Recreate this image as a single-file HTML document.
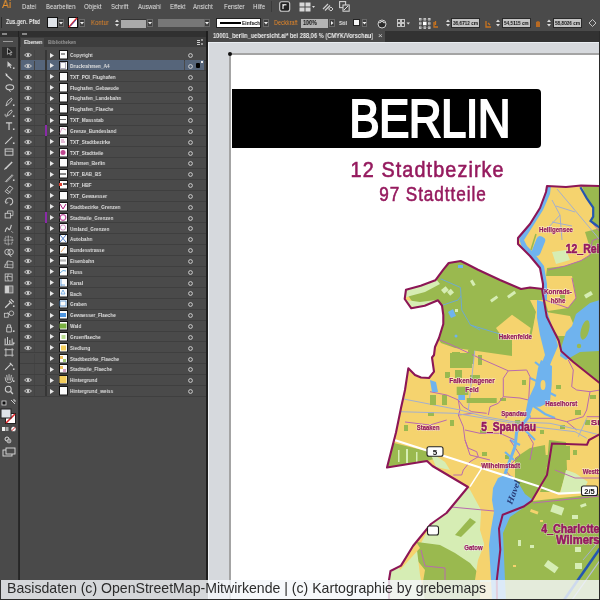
<!DOCTYPE html><html><head><meta charset="utf-8"><style>
*{margin:0;padding:0;box-sizing:border-box}
html,body{width:600px;height:600px;overflow:hidden;background:#4a4a4a;font-family:"Liberation Sans", sans-serif}
.a{position:absolute}
.t{position:absolute;white-space:nowrap;line-height:1;transform-origin:0 0;will-change:transform}
</style></head><body>
<div class="t" style="left:2.0px;top:-0.61px;font-size:11.5px;color:#e8922e;font-weight:normal;transform:scaleX(0.9);">Ai</div>
<div class="t" style="left:22px;top:2.62px;font-size:7.6px;color:#e2e2e2;font-weight:normal;transform:scaleX(0.8);">Datei</div>
<div class="t" style="left:45.6px;top:2.62px;font-size:7.6px;color:#e2e2e2;font-weight:normal;transform:scaleX(0.8);">Bearbeiten</div>
<div class="t" style="left:83.75px;top:2.62px;font-size:7.6px;color:#e2e2e2;font-weight:normal;transform:scaleX(0.8);">Objekt</div>
<div class="t" style="left:111px;top:2.62px;font-size:7.6px;color:#e2e2e2;font-weight:normal;transform:scaleX(0.8);">Schrift</div>
<div class="t" style="left:137.5px;top:2.62px;font-size:7.6px;color:#e2e2e2;font-weight:normal;transform:scaleX(0.8);">Auswahl</div>
<div class="t" style="left:170px;top:2.62px;font-size:7.6px;color:#e2e2e2;font-weight:normal;transform:scaleX(0.8);">Effekt</div>
<div class="t" style="left:192.5px;top:2.62px;font-size:7.6px;color:#e2e2e2;font-weight:normal;transform:scaleX(0.8);">Ansicht</div>
<div class="t" style="left:224px;top:2.62px;font-size:7.6px;color:#e2e2e2;font-weight:normal;transform:scaleX(0.8);">Fenster</div>
<div class="t" style="left:252.5px;top:2.62px;font-size:7.6px;color:#e2e2e2;font-weight:normal;transform:scaleX(0.8);">Hilfe</div>
<div class="a" style="left:271px;top:1px;width:1px;height:11px;background:#3a3a3a"></div>
<svg class="a" style="left:279px;top:1px" width="12" height="11"><rect x="0.7" y="0.7" width="10" height="9.5" rx="2" fill="#222" stroke="#cfcfcf" stroke-width="1.1"/><path d="M4 3 V8 M4 5 q1 -2 3.5 -1" stroke="#eee" stroke-width="1.2" fill="none"/></svg>
<svg class="a" style="left:299px;top:1.5px" width="17" height="10"><rect x="0.5" y="0.5" width="5" height="4" fill="#d8d8d8"/><rect x="6.5" y="0.5" width="5" height="4" fill="#d8d8d8"/><rect x="0.5" y="5.5" width="5" height="4" fill="#d8d8d8"/><rect x="6.5" y="5.5" width="5" height="4" fill="#d8d8d8"/><path d="M13 4 L16 4 L14.5 6 Z" fill="#ddd"/></svg>
<svg class="a" style="left:322px;top:1px" width="12" height="11"><path d="M1 8 L6 3 M3 9.5 L8 4.5" stroke="#cfcfcf" stroke-width="1.2"/><path d="M6.5 8 L9 6 L11 8 L9 10 Z" stroke="#cfcfcf" stroke-width="1" fill="none"/></svg>
<svg class="a" style="left:338.5px;top:1px" width="11" height="11"><rect x="0.6" y="0.6" width="6" height="6" fill="none" stroke="#d0d0d0" stroke-width="1.1"/><rect x="4" y="4" width="6.2" height="6.2" fill="#4a4a4a" stroke="#d0d0d0" stroke-width="1.1"/><path d="M5 9 L9 5" stroke="#ddd"/></svg>
<div class="a" style="left:1px;top:17px;width:1px;height:11px;background:#2c2c2c"></div>
<div class="t" style="left:5.6px;top:19.21px;font-size:6.4px;color:#e8e8e8;font-weight:bold;transform:scaleX(0.82);">Zus.gen. Pfad</div>
<div class="a" style="left:47px;top:17px;width:10.5px;height:11px;background:#dfe3e8;border:1px solid #111"></div>
<svg class="a" style="left:58px;top:19px" width="6" height="8"><rect x="0.5" y="0.5" width="5" height="7" fill="#3e3e3e" stroke="#6a6a6a"/><path d="M1.0 3.0 L5.0 3.0 L3.0 5.5 Z" fill="#eee"/></svg>
<svg class="a" style="left:68px;top:17px" width="10" height="11"><rect x="0.5" y="0.5" width="9" height="10" fill="#fff" stroke="#111"/><path d="M1 10 L9 1" stroke="#e0262a" stroke-width="1.6"/><path d="M2.5 9 L8 3" stroke="#3050c0" stroke-width="0.8"/></svg>
<svg class="a" style="left:79px;top:19px" width="6" height="8"><rect x="0.5" y="0.5" width="5" height="7" fill="#3e3e3e" stroke="#6a6a6a"/><path d="M1.0 3.0 L5.0 3.0 L3.0 5.5 Z" fill="#eee"/></svg>
<div class="t" style="left:91px;top:18.66px;font-size:7px;color:#e2862a;font-weight:normal;transform:scaleX(0.86);">Kontur</div>
<svg class="a" style="left:114px;top:18px" width="6" height="10"><path d="M1 4 L3 1.5 L5 4 Z M1 6 L3 8.5 L5 6 Z" fill="#ddd"/></svg>
<div class="a" style="left:121px;top:19px;width:25px;height:8.5px;background:#a9a9a9;border-top:1px solid #333"></div>
<svg class="a" style="left:147px;top:19px" width="6" height="8"><rect x="0.5" y="0.5" width="5" height="7" fill="#3e3e3e" stroke="#6a6a6a"/><path d="M1.0 3.0 L5.0 3.0 L3.0 5.5 Z" fill="#eee"/></svg>
<div class="a" style="left:157.5px;top:18.7px;width:46.5px;height:8px;background:#777"></div>
<svg class="a" style="left:204px;top:19px" width="6" height="8"><rect x="0.5" y="0.5" width="5" height="7" fill="#3e3e3e" stroke="#6a6a6a"/><path d="M1.0 3.0 L5.0 3.0 L3.0 5.5 Z" fill="#eee"/></svg>
<div class="a" style="left:216px;top:17.5px;width:45px;height:10px;background:#fff;border:1px solid #222"></div>
<div class="a" style="left:220px;top:21.5px;width:21px;height:2px;background:#000"></div>
<div class="t" style="left:242px;top:19.78px;font-size:6.1px;color:#111;font-weight:bold;transform:scaleX(0.82);">Einfach</div>
<svg class="a" style="left:262.5px;top:19px" width="6" height="8"><rect x="0.5" y="0.5" width="5" height="7" fill="#3e3e3e" stroke="#6a6a6a"/><path d="M1.0 3.0 L5.0 3.0 L3.0 5.5 Z" fill="#eee"/></svg>
<div class="t" style="left:274px;top:18.86px;font-size:7px;color:#e2862a;font-weight:normal;transform:scaleX(0.8);">Deckkraft</div>
<div class="a" style="left:301px;top:18.5px;width:26.5px;height:9px;background:#b4b4b4"></div>
<div class="t" style="left:303px;top:19.60px;font-size:6.3px;color:#111;font-weight:bold;transform:scaleX(0.86);">100%</div>
<svg class="a" style="left:329px;top:19px" width="6" height="8"><rect x="0.5" y="0.5" width="5" height="7" fill="#3e3e3e" stroke="#6a6a6a"/><path d="M2 2 L4.5 4 L2 6 Z" fill="#eee"/></svg>
<div class="t" style="left:339px;top:19.57px;font-size:6.0px;color:#e0e0e0;font-weight:bold;transform:scaleX(0.86);">Stil</div>
<div class="a" style="left:352.5px;top:19px;width:7.5px;height:7px;background:#f4f4f4;border:1px solid #222"></div>
<svg class="a" style="left:361.5px;top:19px" width="5" height="8"><rect x="0.5" y="0.5" width="4" height="7" fill="#3e3e3e" stroke="#6a6a6a"/><path d="M0.5 3.0 L4.5 3.0 L2.5 5.5 Z" fill="#eee"/></svg>
<svg class="a" style="left:377px;top:18.5px" width="10" height="10"><circle cx="5" cy="5" r="4" fill="#2a2a2a" stroke="#cfcfcf" stroke-width="1"/><path d="M2.5 4 q2.5 -3 5 0" stroke="#eee" stroke-width="1.2" fill="none"/></svg>
<svg class="a" style="left:397px;top:19px" width="14" height="9"><rect x="0.5" y="0.5" width="3" height="3" fill="none" stroke="#d0d0d0" stroke-width="0.9"/><rect x="4.5" y="0.5" width="3" height="3" fill="none" stroke="#d0d0d0" stroke-width="0.9"/><rect x="0.5" y="4.5" width="3" height="3" fill="none" stroke="#d0d0d0" stroke-width="0.9"/><rect x="4.5" y="4.5" width="3" height="3" fill="none" stroke="#d0d0d0" stroke-width="0.9"/><path d="M9.5 3.5 L13 3.5 L11.25 5.5 Z" fill="#ddd"/></svg>
<svg class="a" style="left:419px;top:18px" width="12" height="11"><g fill="#d0d0d0"><rect x="0" y="0" width="2.5" height="2.5"/><rect x="4.5" y="0" width="2.5" height="2.5"/><rect x="9" y="0" width="2.5" height="2.5"/><rect x="0" y="4.2" width="2.5" height="2.5"/><rect x="9" y="4.2" width="2.5" height="2.5"/><rect x="0" y="8.4" width="2.5" height="2.5"/><rect x="4.5" y="8.4" width="2.5" height="2.5"/><rect x="9" y="8.4" width="2.5" height="2.5"/></g><rect x="4" y="3.7" width="3.5" height="3.5" fill="#fff"/><path d="M1.2 1.2 H10.2 V9.6 H1.2 Z" stroke="#888" stroke-width="0.6" fill="none"/></svg>
<svg class="a" style="left:433px;top:20px" width="6" height="8"><path d="M1 2 L1 7 L5 7 M2.5 1 L2.5 5" stroke="#c8731f" stroke-width="1.3" fill="none"/></svg>
<svg class="a" style="left:445px;top:18px" width="6" height="10"><path d="M1 4 L3 1.5 L5 4 Z M1 6 L3 8.5 L5 6 Z" fill="#ddd"/></svg>
<div class="a" style="left:451px;top:18px;width:29px;height:9.5px;background:#c4c4c4;border:1px solid #2a2a2a"></div>
<div class="t" style="left:452.5px;top:19.87px;font-size:6.0px;color:#111;font-weight:bold;transform:scaleX(0.78);">36,6712 cm</div>
<svg class="a" style="left:484.5px;top:20px" width="7" height="8"><path d="M1 1 L1 7 L6 7 M3 3 L5 5" stroke="#c8731f" stroke-width="1.3" fill="none"/></svg>
<svg class="a" style="left:495px;top:18px" width="6" height="10"><path d="M1 4 L3 1.5 L5 4 Z M1 6 L3 8.5 L5 6 Z" fill="#ddd"/></svg>
<div class="a" style="left:502px;top:18px;width:29px;height:9.5px;background:#c4c4c4;border:1px solid #2a2a2a"></div>
<div class="t" style="left:503.5px;top:19.87px;font-size:6.0px;color:#111;font-weight:bold;transform:scaleX(0.78);">54,5115 cm</div>
<svg class="a" style="left:535px;top:20px" width="7" height="8"><path d="M1 7 L1 2 L3 1 L5 2 L5 7 Z" fill="#b86a22"/></svg>
<svg class="a" style="left:546px;top:18px" width="6" height="10"><path d="M1 4 L3 1.5 L5 4 Z M1 6 L3 8.5 L5 6 Z" fill="#ddd"/></svg>
<div class="a" style="left:553px;top:18px;width:29px;height:9.5px;background:#c4c4c4;border:1px solid #2a2a2a"></div>
<div class="t" style="left:554.5px;top:19.87px;font-size:6.0px;color:#111;font-weight:bold;transform:scaleX(0.78);">58,8026 cm</div>
<svg class="a" style="left:588px;top:18px" width="9" height="10"><path d="M4.5 1.5 L8 5 L4.5 8.5 L1 5 Z" stroke="#d0d0d0" stroke-width="0.9" fill="none"/></svg>
<div class="a" style="left:0;top:31px;width:208px;height:6px;background:#303030"></div>
<div class="a" style="left:2px;top:33px;width:5px;height:2px;background:#888"></div>
<div class="a" style="left:22px;top:33px;width:5px;height:2px;background:#888"></div>
<div class="a" style="left:18px;top:31px;width:1px;height:6px;background:#222"></div>
<div class="a" style="left:208px;top:31px;width:392px;height:11px;background:#323232"></div>
<div class="a" style="left:208px;top:31px;width:177px;height:11px;background:#4a4a4a"></div>
<div class="t" style="left:212.5px;top:33.15px;font-size:6.8px;color:#ececec;font-weight:bold;transform:scaleX(0.84);">10001_berlin_uebersicht.ai* bei 288,06 % (CMYK/Vorschau)</div>
<div class="t" style="left:377.5px;top:32.26px;font-size:8px;color:#cfcfcf;font-weight:normal;transform:scaleX(1.0);">×</div>
<div class="a" style="left:18px;top:37px;width:2px;height:543px;background:#2a2a2a"></div>
<div class="a" style="left:3px;top:40.5px;width:10px;height:1px;background:#9a9a9a"></div>
<div class="a" style="left:2px;top:47px;width:14px;height:10.5px;background:#2f2f2f"></div>
<svg class="a" style="left:1px;top:44.5px" width="16" height="15"><g transform="translate(1.8 1.6) scale(0.78)" opacity="0.9"><path d="M6 2 L6 10 L8 8 L10 11 L11 10.5 L9.5 7.5 L12 7.5 Z" fill="#111" stroke="#ddd" stroke-width="0.9"/></g></svg>
<svg class="a" style="left:1px;top:58.0px" width="16" height="15"><g transform="translate(1.8 1.6) scale(0.78)" opacity="0.9"><path d="M6 2 L6 10 L8 8 L10 11 L11 10.5 L9.5 7.5 L12 7.5 Z" fill="#ddd"/><rect x="13" y="10" width="2" height="2" fill="#ddd"/></g></svg>
<svg class="a" style="left:1px;top:69.5px" width="16" height="15"><g transform="translate(1.8 1.6) scale(0.78)" opacity="0.9"><path d="M4 4 L12 11" stroke="#ddd" stroke-width="1.6"/><path d="M3 2 L6 3 L5 6 Z" fill="#eee"/></g></svg>
<svg class="a" style="left:1px;top:81.0px" width="16" height="15"><g transform="translate(1.8 1.6) scale(0.78)" opacity="0.9"><ellipse cx="9" cy="6" rx="5" ry="3.3" stroke="#ddd" stroke-width="1.3" fill="none"/><path d="M7 8 L10 12" stroke="#ddd" stroke-width="1.2"/></g></svg>
<svg class="a" style="left:1px;top:94.5px" width="16" height="15"><g transform="translate(1.8 1.6) scale(0.78)" opacity="0.9"><path d="M4 12 L6 6 L11 2 L12 4 L8 9 Z" stroke="#ddd" stroke-width="1.1" fill="none"/><rect x="13" y="10" width="2" height="2" fill="#ddd"/></g></svg>
<svg class="a" style="left:1px;top:106.0px" width="16" height="15"><g transform="translate(1.8 1.6) scale(0.78)" opacity="0.9"><path d="M5 11 L7 6 L11 3 L12 5 L9 9 Z" stroke="#ddd" stroke-width="1.1" fill="none"/><path d="M3 8 q-1 3 2 4" stroke="#ddd" fill="none"/><rect x="13" y="10" width="2" height="2" fill="#ddd"/></g></svg>
<svg class="a" style="left:1px;top:118.5px" width="16" height="15"><g transform="translate(1.8 1.6) scale(0.78)" opacity="0.9"><path d="M4 3 H12 M8 3 V12" stroke="#ddd" stroke-width="1.5" fill="none"/><rect x="13" y="10" width="2" height="2" fill="#ddd"/></g></svg>
<svg class="a" style="left:1px;top:132.5px" width="16" height="15"><g transform="translate(1.8 1.6) scale(0.78)" opacity="0.9"><path d="M3 12 L12 3" stroke="#ddd" stroke-width="1.3"/><rect x="13" y="10" width="2" height="2" fill="#ddd"/></g></svg>
<svg class="a" style="left:1px;top:145.0px" width="16" height="15"><g transform="translate(1.8 1.6) scale(0.78)" opacity="0.9"><rect x="3" y="3" width="10" height="8" stroke="#ddd" stroke-width="1.2" fill="none"/><path d="M3 6 H13" stroke="#ddd"/></g></svg>
<svg class="a" style="left:1px;top:157.5px" width="16" height="15"><g transform="translate(1.8 1.6) scale(0.78)" opacity="0.9"><path d="M3 12 L12 3" stroke="#ddd" stroke-width="2"/><path d="M2 13 q1 -3 3 -2" stroke="#ddd" fill="none"/></g></svg>
<svg class="a" style="left:1px;top:169.5px" width="16" height="15"><g transform="translate(1.8 1.6) scale(0.78)" opacity="0.9"><path d="M4 12 L12 4 L13 5 L5 13 Z M3 13 L4 12" stroke="#ddd" stroke-width="1.1" fill="none"/><rect x="13" y="10" width="2" height="2" fill="#ddd"/></g></svg>
<svg class="a" style="left:1px;top:182.0px" width="16" height="15"><g transform="translate(1.8 1.6) scale(0.78)" opacity="0.9"><path d="M3 10 L9 3 L13 6 L7 13 Z" stroke="#ddd" stroke-width="1.1" fill="none"/><path d="M5 8 L10 12" stroke="#ddd"/></g></svg>
<svg class="a" style="left:1px;top:194.2px" width="16" height="15"><g transform="translate(1.8 1.6) scale(0.78)" opacity="0.9"><path d="M4 9 A4.5 4.5 0 1 1 9 12" stroke="#ddd" stroke-width="1.3" fill="none"/><path d="M3 7 L4 10 L7 9" stroke="#ddd" fill="none"/></g></svg>
<svg class="a" style="left:1px;top:206.5px" width="16" height="15"><g transform="translate(1.8 1.6) scale(0.78)" opacity="0.9"><rect x="3" y="6" width="7" height="6" stroke="#ddd" stroke-width="1.1" fill="none"/><path d="M6 6 V3 H13 V9 H10" stroke="#ddd" fill="none"/></g></svg>
<svg class="a" style="left:1px;top:220.5px" width="16" height="15"><g transform="translate(1.8 1.6) scale(0.78)" opacity="0.9"><path d="M3 12 q2 -8 4 -4 q2 4 4 -5" stroke="#ddd" stroke-width="1.4" fill="none"/><path d="M11 11 L13 13" stroke="#ddd"/></g></svg>
<svg class="a" style="left:1px;top:232.5px" width="16" height="15"><g transform="translate(1.8 1.6) scale(0.78)" opacity="0.9"><rect x="3" y="3" width="9" height="9" stroke="#ddd" stroke-width="1" stroke-dasharray="2 1" fill="none"/><path d="M1 7 H14 M7 1 V14" stroke="#ddd" stroke-width="0.7"/></g></svg>
<svg class="a" style="left:1px;top:245.0px" width="16" height="15"><g transform="translate(1.8 1.6) scale(0.78)" opacity="0.9"><circle cx="6" cy="7" r="3.5" stroke="#ddd" stroke-width="1.1" fill="none"/><circle cx="10" cy="7" r="3.5" stroke="#ddd" stroke-width="1.1" fill="none"/><path d="M8 10 L11 13" stroke="#ddd" stroke-width="1.3"/></g></svg>
<svg class="a" style="left:1px;top:257.2px" width="16" height="15"><g transform="translate(1.8 1.6) scale(0.78)" opacity="0.9"><path d="M2 11 L6 3 L13 4 L13 12 Z" stroke="#ddd" stroke-width="1" fill="none"/><path d="M6 3 L6 12 M2 8 H13" stroke="#ddd" stroke-width="0.7"/></g></svg>
<svg class="a" style="left:1px;top:269.5px" width="16" height="15"><g transform="translate(1.8 1.6) scale(0.78)" opacity="0.9"><rect x="3" y="3" width="9" height="9" stroke="#ddd" stroke-width="1" fill="none"/><path d="M3 7 q5 -2 9 0 M7 3 q-2 5 0 9" stroke="#ddd" fill="none"/></g></svg>
<svg class="a" style="left:1px;top:281.5px" width="16" height="15"><g transform="translate(1.8 1.6) scale(0.78)" opacity="0.9"><rect x="3" y="3" width="10" height="9" stroke="#ddd" stroke-width="1" fill="#777"/><rect x="3" y="3" width="5" height="9" fill="#ddd"/></g></svg>
<svg class="a" style="left:1px;top:295.5px" width="16" height="15"><g transform="translate(1.8 1.6) scale(0.78)" opacity="0.9"><path d="M3 13 L10 6 M8 4 L12 8 M10 2 L14 6" stroke="#ddd" stroke-width="1.5" fill="none"/><rect x="13" y="10" width="2" height="2" fill="#ddd"/></g></svg>
<svg class="a" style="left:1px;top:306.5px" width="16" height="15"><g transform="translate(1.8 1.6) scale(0.78)" opacity="0.9"><rect x="2" y="6" width="5" height="5" stroke="#ddd" fill="none"/><circle cx="11" cy="6" r="3" stroke="#ddd" fill="none"/><path d="M6 5 L9 8" stroke="#ddd"/></g></svg>
<svg class="a" style="left:1px;top:320.5px" width="16" height="15"><g transform="translate(1.8 1.6) scale(0.78)" opacity="0.9"><path d="M5 12 V6 H11 V12 Z M6 6 V3 H10 V6" stroke="#ddd" stroke-width="1.1" fill="none"/><rect x="13" y="10" width="2" height="2" fill="#ddd"/></g></svg>
<svg class="a" style="left:1px;top:332.5px" width="16" height="15"><g transform="translate(1.8 1.6) scale(0.78)" opacity="0.9"><path d="M3 12 V5 M6 12 V3 M9 12 V7 M12 12 V5 M2 13 H14" stroke="#ddd" stroke-width="1.3"/><rect x="13" y="10" width="2" height="2" fill="#ddd"/></g></svg>
<svg class="a" style="left:1px;top:344.5px" width="16" height="15"><g transform="translate(1.8 1.6) scale(0.78)" opacity="0.9"><rect x="4" y="4" width="8" height="7" stroke="#ddd" stroke-width="1.1" fill="none"/><path d="M2 4 H4 M12 4 H14 M2 11 H4 M12 11 H14 M4 2 V4 M12 2 V4 M4 11 V13 M12 11 V13" stroke="#ddd"/></g></svg>
<svg class="a" style="left:1px;top:358.5px" width="16" height="15"><g transform="translate(1.8 1.6) scale(0.78)" opacity="0.9"><path d="M3 12 L11 4 M9 3 L13 7" stroke="#ddd" stroke-width="1.4" fill="none"/><rect x="13" y="10" width="2" height="2" fill="#ddd"/></g></svg>
<svg class="a" style="left:1px;top:371.0px" width="16" height="15"><g transform="translate(1.8 1.6) scale(0.78)" opacity="0.9"><path d="M4 11 L3 6 M6 10 L5 3 M8 10 L8 2 M10 10 L11 3 M12 11 L13 6 M4 11 q4 4 8 0" stroke="#ddd" stroke-width="1.1" fill="none"/><rect x="13" y="10" width="2" height="2" fill="#ddd"/></g></svg>
<svg class="a" style="left:1px;top:383.2px" width="16" height="15"><g transform="translate(1.8 1.6) scale(0.78)" opacity="0.9"><circle cx="7" cy="6" r="3.8" stroke="#ddd" stroke-width="1.3" fill="none"/><path d="M10 9 L13 12" stroke="#ddd" stroke-width="1.8"/></g></svg>
<svg class="a" style="left:0px;top:398px" width="18" height="62"><rect x="2" y="3" width="4" height="4" fill="#111" stroke="#ddd" stroke-width="0.8"/><path d="M11 2 L15 6 M13 2 H15 V4" stroke="#ddd" stroke-width="0.9" fill="none"/><rect x="5.5" y="15.5" width="10" height="10" fill="#fff" stroke="#222"/><path d="M6 25 L15 16" stroke="#e0262a" stroke-width="1.6"/><rect x="1" y="11" width="10" height="9" fill="#dfe3e8" stroke="#222"/><rect x="2" y="29" width="3" height="4" fill="#eee"/><rect x="5.5" y="29" width="3" height="4" fill="#aaa"/><circle cx="13.5" cy="31" r="2.6" fill="#fff" stroke="#222" stroke-width="0.5"/><path d="M11.8 32.8 L15.2 29.2" stroke="#e0262a" stroke-width="1"/><circle cx="7" cy="41" r="2" fill="none" stroke="#ddd"/><circle cx="9" cy="43" r="2" fill="#888" stroke="#ddd" stroke-width="0.6"/><rect x="3" y="52" width="9" height="6" fill="none" stroke="#ddd" stroke-width="0.9"/><rect x="6" y="50" width="9" height="6" fill="#4a4a4a" stroke="#ddd" stroke-width="0.9"/></svg>
<div class="a" style="left:19px;top:37px;width:1px;height:543px;background:#262626"></div>
<div class="a" style="left:20px;top:37px;width:186px;height:10px;background:#3d3d3d"></div>
<div class="a" style="left:21px;top:38px;width:22.7px;height:9px;background:#4a4a4a"></div>
<div class="t" style="left:24px;top:38.97px;font-size:6.0px;color:#eeeeee;font-weight:bold;transform:scaleX(0.84);">Ebenen</div>
<div class="t" style="left:48px;top:38.97px;font-size:6.0px;color:#9a9a9a;font-weight:bold;transform:scaleX(0.78);">Bibliotheken</div>
<div class="a" style="left:197px;top:40px;width:3px;height:1px;background:#ccc;box-shadow:0 2px 0 #ccc,0 4px 0 #ccc"></div>
<div class="a" style="left:201px;top:39px;width:3px;height:6px;border-left:2px dotted #999"></div>
<div class="a" style="left:206px;top:31px;width:2px;height:549px;background:#1e1e1e"></div>
<div class="a" style="left:20px;top:59.60px;width:186px;height:1px;background:#3f3f3f"></div>
<div class="a" style="left:44.5px;top:49.50px;width:2.2px;height:10.6px;background:#363636"></div>
<div class="a" style="left:33.5px;top:50.00px;width:1px;height:9.5px;background:#444"></div>
<svg class="a" style="left:23.5px;top:52.00px" width="8" height="6"><path d="M0.5 3 Q4 -0.5 7.5 3 Q4 6.5 0.5 3 Z" fill="none" stroke="#d0d0d0" stroke-width="0.9"/><circle cx="4" cy="3" r="1.2" fill="#d0d0d0"/></svg>
<svg class="a" style="left:50px;top:52.50px" width="4" height="5"><path d="M0 0 L4 2.5 L0 5 Z" fill="#e8e8e8"/></svg>
<svg class="a" style="left:59px;top:50.00px" width="9" height="9.5"><rect x="0.5" y="0.5" width="8" height="8.5" fill="#fbfbfb" stroke="#151515"/><rect x="2" y="3" width="4" height="2" fill="#999"/></svg>
<div class="t" style="left:70px;top:52.07px;font-size:6.0px;color:#dedede;font-weight:bold;transform:scaleX(0.8);">Copyright</div>
<svg class="a" style="left:187px;top:52.00px" width="7" height="7"><circle cx="3.5" cy="3.5" r="1.9" fill="none" stroke="#d8d8d8" stroke-width="0.9"/></svg>
<div class="a" style="left:21px;top:60.34px;width:163px;height:10px;background:#56657a"></div>
<div class="a" style="left:185px;top:60.34px;width:19px;height:10px;background:#56657a"></div>
<div class="a" style="left:20px;top:70.44px;width:186px;height:1px;background:#3f3f3f"></div>
<div class="a" style="left:44.5px;top:60.34px;width:2.2px;height:10.6px;background:#363636"></div>
<div class="a" style="left:33.5px;top:60.84px;width:1px;height:9.5px;background:#444"></div>
<svg class="a" style="left:23.5px;top:62.84px" width="8" height="6"><path d="M0.5 3 Q4 -0.5 7.5 3 Q4 6.5 0.5 3 Z" fill="none" stroke="#d0d0d0" stroke-width="0.9"/><circle cx="4" cy="3" r="1.2" fill="#d0d0d0"/></svg>
<svg class="a" style="left:50px;top:63.34px" width="4" height="5"><path d="M0 0 L4 2.5 L0 5 Z" fill="#e8e8e8"/></svg>
<svg class="a" style="left:59px;top:60.84px" width="9" height="9.5"><rect x="0.5" y="0.5" width="8" height="8.5" fill="#fbfbfb" stroke="#151515"/><rect x="1.5" y="1.5" width="5" height="6" fill="none" stroke="#aab"/></svg>
<div class="t" style="left:70px;top:62.91px;font-size:6.0px;color:#dedede;font-weight:bold;transform:scaleX(0.8);">Druckrahmen_A4</div>
<svg class="a" style="left:187px;top:62.84px" width="7" height="7"><circle cx="3.5" cy="3.5" r="1.9" fill="none" stroke="#d8d8d8" stroke-width="0.9"/></svg>
<div class="a" style="left:195.5px;top:63.04px;width:4.5px;height:4.5px;background:#000;border-radius:1px"></div>
<div class="a" style="left:201px;top:60.84px;width:2px;height:2px;background:#eee"></div>
<div class="a" style="left:20px;top:81.28px;width:186px;height:1px;background:#3f3f3f"></div>
<div class="a" style="left:44.5px;top:71.18px;width:2.2px;height:10.6px;background:#363636"></div>
<div class="a" style="left:33.5px;top:71.68px;width:1px;height:9.5px;background:#444"></div>
<svg class="a" style="left:23.5px;top:73.68px" width="8" height="6"><path d="M0.5 3 Q4 -0.5 7.5 3 Q4 6.5 0.5 3 Z" fill="none" stroke="#d0d0d0" stroke-width="0.9"/><circle cx="4" cy="3" r="1.2" fill="#d0d0d0"/></svg>
<svg class="a" style="left:50px;top:74.18px" width="4" height="5"><path d="M0 0 L4 2.5 L0 5 Z" fill="#e8e8e8"/></svg>
<svg class="a" style="left:59px;top:71.68px" width="9" height="9.5"><rect x="0.5" y="0.5" width="8" height="8.5" fill="#fbfbfb" stroke="#151515"/></svg>
<div class="t" style="left:70px;top:73.75px;font-size:6.0px;color:#dedede;font-weight:bold;transform:scaleX(0.8);">TXT_POI_Flughafen</div>
<svg class="a" style="left:187px;top:73.68px" width="7" height="7"><circle cx="3.5" cy="3.5" r="1.9" fill="none" stroke="#d8d8d8" stroke-width="0.9"/></svg>
<div class="a" style="left:20px;top:92.12px;width:186px;height:1px;background:#3f3f3f"></div>
<div class="a" style="left:44.5px;top:82.02px;width:2.2px;height:10.6px;background:#363636"></div>
<div class="a" style="left:33.5px;top:82.52px;width:1px;height:9.5px;background:#444"></div>
<svg class="a" style="left:23.5px;top:84.52px" width="8" height="6"><path d="M0.5 3 Q4 -0.5 7.5 3 Q4 6.5 0.5 3 Z" fill="none" stroke="#d0d0d0" stroke-width="0.9"/><circle cx="4" cy="3" r="1.2" fill="#d0d0d0"/></svg>
<svg class="a" style="left:50px;top:85.02px" width="4" height="5"><path d="M0 0 L4 2.5 L0 5 Z" fill="#e8e8e8"/></svg>
<svg class="a" style="left:59px;top:82.52px" width="9" height="9.5"><rect x="0.5" y="0.5" width="8" height="8.5" fill="#fbfbfb" stroke="#151515"/></svg>
<div class="t" style="left:70px;top:84.59px;font-size:6.0px;color:#dedede;font-weight:bold;transform:scaleX(0.8);">Flughafen_Gebaeude</div>
<svg class="a" style="left:187px;top:84.52px" width="7" height="7"><circle cx="3.5" cy="3.5" r="1.9" fill="none" stroke="#d8d8d8" stroke-width="0.9"/></svg>
<div class="a" style="left:20px;top:102.96px;width:186px;height:1px;background:#3f3f3f"></div>
<div class="a" style="left:44.5px;top:92.86px;width:2.2px;height:10.6px;background:#363636"></div>
<div class="a" style="left:33.5px;top:93.36px;width:1px;height:9.5px;background:#444"></div>
<svg class="a" style="left:23.5px;top:95.36px" width="8" height="6"><path d="M0.5 3 Q4 -0.5 7.5 3 Q4 6.5 0.5 3 Z" fill="none" stroke="#d0d0d0" stroke-width="0.9"/><circle cx="4" cy="3" r="1.2" fill="#d0d0d0"/></svg>
<svg class="a" style="left:50px;top:95.86px" width="4" height="5"><path d="M0 0 L4 2.5 L0 5 Z" fill="#e8e8e8"/></svg>
<svg class="a" style="left:59px;top:93.36px" width="9" height="9.5"><rect x="0.5" y="0.5" width="8" height="8.5" fill="#fbfbfb" stroke="#151515"/></svg>
<div class="t" style="left:70px;top:95.43px;font-size:6.0px;color:#dedede;font-weight:bold;transform:scaleX(0.8);">Flughafen_Landebahn</div>
<svg class="a" style="left:187px;top:95.36px" width="7" height="7"><circle cx="3.5" cy="3.5" r="1.9" fill="none" stroke="#d8d8d8" stroke-width="0.9"/></svg>
<div class="a" style="left:20px;top:113.80px;width:186px;height:1px;background:#3f3f3f"></div>
<div class="a" style="left:44.5px;top:103.70px;width:2.2px;height:10.6px;background:#363636"></div>
<div class="a" style="left:33.5px;top:104.20px;width:1px;height:9.5px;background:#444"></div>
<svg class="a" style="left:23.5px;top:106.20px" width="8" height="6"><path d="M0.5 3 Q4 -0.5 7.5 3 Q4 6.5 0.5 3 Z" fill="none" stroke="#d0d0d0" stroke-width="0.9"/><circle cx="4" cy="3" r="1.2" fill="#d0d0d0"/></svg>
<svg class="a" style="left:50px;top:106.70px" width="4" height="5"><path d="M0 0 L4 2.5 L0 5 Z" fill="#e8e8e8"/></svg>
<svg class="a" style="left:59px;top:104.20px" width="9" height="9.5"><rect x="0.5" y="0.5" width="8" height="8.5" fill="#fbfbfb" stroke="#151515"/></svg>
<div class="t" style="left:70px;top:106.27px;font-size:6.0px;color:#dedede;font-weight:bold;transform:scaleX(0.8);">Flughafen_Flaeche</div>
<svg class="a" style="left:187px;top:106.20px" width="7" height="7"><circle cx="3.5" cy="3.5" r="1.9" fill="none" stroke="#d8d8d8" stroke-width="0.9"/></svg>
<div class="a" style="left:20px;top:124.64px;width:186px;height:1px;background:#3f3f3f"></div>
<div class="a" style="left:44.5px;top:114.54px;width:2.2px;height:10.6px;background:#363636"></div>
<div class="a" style="left:33.5px;top:115.04px;width:1px;height:9.5px;background:#444"></div>
<svg class="a" style="left:23.5px;top:117.04px" width="8" height="6"><path d="M0.5 3 Q4 -0.5 7.5 3 Q4 6.5 0.5 3 Z" fill="none" stroke="#d0d0d0" stroke-width="0.9"/><circle cx="4" cy="3" r="1.2" fill="#d0d0d0"/></svg>
<svg class="a" style="left:50px;top:117.54px" width="4" height="5"><path d="M0 0 L4 2.5 L0 5 Z" fill="#e8e8e8"/></svg>
<svg class="a" style="left:59px;top:115.04px" width="9" height="9.5"><rect x="0.5" y="0.5" width="8" height="8.5" fill="#fbfbfb" stroke="#151515"/><rect x="1" y="4" width="6" height="1" fill="#666"/></svg>
<div class="t" style="left:70px;top:117.11px;font-size:6.0px;color:#dedede;font-weight:bold;transform:scaleX(0.8);">TXT_Massstab</div>
<svg class="a" style="left:187px;top:117.04px" width="7" height="7"><circle cx="3.5" cy="3.5" r="1.9" fill="none" stroke="#d8d8d8" stroke-width="0.9"/></svg>
<div class="a" style="left:20px;top:135.48px;width:186px;height:1px;background:#3f3f3f"></div>
<div class="a" style="left:44.5px;top:125.38px;width:2.2px;height:10.6px;background:#8a2aa8"></div>
<div class="a" style="left:33.5px;top:125.88px;width:1px;height:9.5px;background:#444"></div>
<svg class="a" style="left:23.5px;top:127.88px" width="8" height="6"><path d="M0.5 3 Q4 -0.5 7.5 3 Q4 6.5 0.5 3 Z" fill="none" stroke="#d0d0d0" stroke-width="0.9"/><circle cx="4" cy="3" r="1.2" fill="#d0d0d0"/></svg>
<svg class="a" style="left:50px;top:128.38px" width="4" height="5"><path d="M0 0 L4 2.5 L0 5 Z" fill="#e8e8e8"/></svg>
<svg class="a" style="left:59px;top:125.88px" width="9" height="9.5"><rect x="0.5" y="0.5" width="8" height="8.5" fill="#fbfbfb" stroke="#151515"/><path d="M1 7 L3 2 L7 4" stroke="#d080b0" fill="none" stroke-width="0.7"/></svg>
<div class="t" style="left:70px;top:127.95px;font-size:6.0px;color:#dedede;font-weight:bold;transform:scaleX(0.8);">Grenze_Bundesland</div>
<svg class="a" style="left:187px;top:127.88px" width="7" height="7"><circle cx="3.5" cy="3.5" r="1.9" fill="none" stroke="#d8d8d8" stroke-width="0.9"/></svg>
<div class="a" style="left:20px;top:146.32px;width:186px;height:1px;background:#3f3f3f"></div>
<div class="a" style="left:44.5px;top:136.22px;width:2.2px;height:10.6px;background:#363636"></div>
<div class="a" style="left:33.5px;top:136.72px;width:1px;height:9.5px;background:#444"></div>
<svg class="a" style="left:23.5px;top:138.72px" width="8" height="6"><path d="M0.5 3 Q4 -0.5 7.5 3 Q4 6.5 0.5 3 Z" fill="none" stroke="#d0d0d0" stroke-width="0.9"/><circle cx="4" cy="3" r="1.2" fill="#d0d0d0"/></svg>
<svg class="a" style="left:50px;top:139.22px" width="4" height="5"><path d="M0 0 L4 2.5 L0 5 Z" fill="#e8e8e8"/></svg>
<svg class="a" style="left:59px;top:136.72px" width="9" height="9.5"><rect x="0.5" y="0.5" width="8" height="8.5" fill="#fbfbfb" stroke="#151515"/><path d="M2 5 h4 M2 3 h3" stroke="#c060a0" stroke-width="0.8"/></svg>
<div class="t" style="left:70px;top:138.79px;font-size:6.0px;color:#dedede;font-weight:bold;transform:scaleX(0.8);">TXT_Stadtbezirke</div>
<svg class="a" style="left:187px;top:138.72px" width="7" height="7"><circle cx="3.5" cy="3.5" r="1.9" fill="none" stroke="#d8d8d8" stroke-width="0.9"/></svg>
<div class="a" style="left:20px;top:157.16px;width:186px;height:1px;background:#3f3f3f"></div>
<div class="a" style="left:44.5px;top:147.06px;width:2.2px;height:10.6px;background:#363636"></div>
<div class="a" style="left:33.5px;top:147.56px;width:1px;height:9.5px;background:#444"></div>
<svg class="a" style="left:23.5px;top:149.56px" width="8" height="6"><path d="M0.5 3 Q4 -0.5 7.5 3 Q4 6.5 0.5 3 Z" fill="none" stroke="#d0d0d0" stroke-width="0.9"/><circle cx="4" cy="3" r="1.2" fill="#d0d0d0"/></svg>
<svg class="a" style="left:50px;top:150.06px" width="4" height="5"><path d="M0 0 L4 2.5 L0 5 Z" fill="#e8e8e8"/></svg>
<svg class="a" style="left:59px;top:147.56px" width="9" height="9.5"><rect x="0.5" y="0.5" width="8" height="8.5" fill="#fbfbfb" stroke="#151515"/><circle cx="4" cy="4.5" r="2.5" fill="#c04890"/></svg>
<div class="t" style="left:70px;top:149.63px;font-size:6.0px;color:#dedede;font-weight:bold;transform:scaleX(0.8);">TXT_Stadtteile</div>
<svg class="a" style="left:187px;top:149.56px" width="7" height="7"><circle cx="3.5" cy="3.5" r="1.9" fill="none" stroke="#d8d8d8" stroke-width="0.9"/></svg>
<div class="a" style="left:20px;top:168.00px;width:186px;height:1px;background:#3f3f3f"></div>
<div class="a" style="left:44.5px;top:157.90px;width:2.2px;height:10.6px;background:#363636"></div>
<div class="a" style="left:33.5px;top:158.40px;width:1px;height:9.5px;background:#444"></div>
<svg class="a" style="left:23.5px;top:160.40px" width="8" height="6"><path d="M0.5 3 Q4 -0.5 7.5 3 Q4 6.5 0.5 3 Z" fill="none" stroke="#d0d0d0" stroke-width="0.9"/><circle cx="4" cy="3" r="1.2" fill="#d0d0d0"/></svg>
<svg class="a" style="left:50px;top:160.90px" width="4" height="5"><path d="M0 0 L4 2.5 L0 5 Z" fill="#e8e8e8"/></svg>
<svg class="a" style="left:59px;top:158.40px" width="9" height="9.5"><rect x="0.5" y="0.5" width="8" height="8.5" fill="#fbfbfb" stroke="#151515"/></svg>
<div class="t" style="left:70px;top:160.47px;font-size:6.0px;color:#dedede;font-weight:bold;transform:scaleX(0.8);">Rahmen_Berlin</div>
<svg class="a" style="left:187px;top:160.40px" width="7" height="7"><circle cx="3.5" cy="3.5" r="1.9" fill="none" stroke="#d8d8d8" stroke-width="0.9"/></svg>
<div class="a" style="left:20px;top:178.84px;width:186px;height:1px;background:#3f3f3f"></div>
<div class="a" style="left:44.5px;top:168.74px;width:2.2px;height:10.6px;background:#363636"></div>
<div class="a" style="left:33.5px;top:169.24px;width:1px;height:9.5px;background:#444"></div>
<svg class="a" style="left:23.5px;top:171.24px" width="8" height="6"><path d="M0.5 3 Q4 -0.5 7.5 3 Q4 6.5 0.5 3 Z" fill="none" stroke="#d0d0d0" stroke-width="0.9"/><circle cx="4" cy="3" r="1.2" fill="#d0d0d0"/></svg>
<svg class="a" style="left:50px;top:171.74px" width="4" height="5"><path d="M0 0 L4 2.5 L0 5 Z" fill="#e8e8e8"/></svg>
<svg class="a" style="left:59px;top:169.24px" width="9" height="9.5"><rect x="0.5" y="0.5" width="8" height="8.5" fill="#fbfbfb" stroke="#151515"/><rect x="1" y="4" width="6" height="2" fill="#888"/></svg>
<div class="t" style="left:70px;top:171.31px;font-size:6.0px;color:#dedede;font-weight:bold;transform:scaleX(0.8);">TXT_BAB_BS</div>
<svg class="a" style="left:187px;top:171.24px" width="7" height="7"><circle cx="3.5" cy="3.5" r="1.9" fill="none" stroke="#d8d8d8" stroke-width="0.9"/></svg>
<div class="a" style="left:20px;top:189.68px;width:186px;height:1px;background:#3f3f3f"></div>
<div class="a" style="left:44.5px;top:179.58px;width:2.2px;height:10.6px;background:#363636"></div>
<div class="a" style="left:33.5px;top:180.08px;width:1px;height:9.5px;background:#444"></div>
<svg class="a" style="left:23.5px;top:182.08px" width="8" height="6"><path d="M0.5 3 Q4 -0.5 7.5 3 Q4 6.5 0.5 3 Z" fill="none" stroke="#d0d0d0" stroke-width="0.9"/><circle cx="4" cy="3" r="1.2" fill="#d0d0d0"/></svg>
<svg class="a" style="left:50px;top:182.58px" width="4" height="5"><path d="M0 0 L4 2.5 L0 5 Z" fill="#e8e8e8"/></svg>
<svg class="a" style="left:59px;top:180.08px" width="9" height="9.5"><rect x="0.5" y="0.5" width="8" height="8.5" fill="#fbfbfb" stroke="#151515"/><rect x="0" y="3" width="3" height="3" fill="#e04030"/><rect x="4" y="3" width="4" height="2" fill="#555"/></svg>
<div class="t" style="left:70px;top:182.15px;font-size:6.0px;color:#dedede;font-weight:bold;transform:scaleX(0.8);">TXT_HBF</div>
<svg class="a" style="left:187px;top:182.08px" width="7" height="7"><circle cx="3.5" cy="3.5" r="1.9" fill="none" stroke="#d8d8d8" stroke-width="0.9"/></svg>
<div class="a" style="left:20px;top:200.52px;width:186px;height:1px;background:#3f3f3f"></div>
<div class="a" style="left:44.5px;top:190.42px;width:2.2px;height:10.6px;background:#363636"></div>
<div class="a" style="left:33.5px;top:190.92px;width:1px;height:9.5px;background:#444"></div>
<svg class="a" style="left:23.5px;top:192.92px" width="8" height="6"><path d="M0.5 3 Q4 -0.5 7.5 3 Q4 6.5 0.5 3 Z" fill="none" stroke="#d0d0d0" stroke-width="0.9"/><circle cx="4" cy="3" r="1.2" fill="#d0d0d0"/></svg>
<svg class="a" style="left:50px;top:193.42px" width="4" height="5"><path d="M0 0 L4 2.5 L0 5 Z" fill="#e8e8e8"/></svg>
<svg class="a" style="left:59px;top:190.92px" width="9" height="9.5"><rect x="0.5" y="0.5" width="8" height="8.5" fill="#fbfbfb" stroke="#151515"/></svg>
<div class="t" style="left:70px;top:192.99px;font-size:6.0px;color:#dedede;font-weight:bold;transform:scaleX(0.8);">TXT_Gewaesser</div>
<svg class="a" style="left:187px;top:192.92px" width="7" height="7"><circle cx="3.5" cy="3.5" r="1.9" fill="none" stroke="#d8d8d8" stroke-width="0.9"/></svg>
<div class="a" style="left:20px;top:211.36px;width:186px;height:1px;background:#3f3f3f"></div>
<div class="a" style="left:44.5px;top:201.26px;width:2.2px;height:10.6px;background:#363636"></div>
<div class="a" style="left:33.5px;top:201.76px;width:1px;height:9.5px;background:#444"></div>
<svg class="a" style="left:23.5px;top:203.76px" width="8" height="6"><path d="M0.5 3 Q4 -0.5 7.5 3 Q4 6.5 0.5 3 Z" fill="none" stroke="#d0d0d0" stroke-width="0.9"/><circle cx="4" cy="3" r="1.2" fill="#d0d0d0"/></svg>
<svg class="a" style="left:50px;top:204.26px" width="4" height="5"><path d="M0 0 L4 2.5 L0 5 Z" fill="#e8e8e8"/></svg>
<svg class="a" style="left:59px;top:201.76px" width="9" height="9.5"><rect x="0.5" y="0.5" width="8" height="8.5" fill="#fbfbfb" stroke="#151515"/><path d="M1 2 L4 7 L7 2" stroke="#b02080" fill="none" stroke-width="1"/></svg>
<div class="t" style="left:70px;top:203.83px;font-size:6.0px;color:#dedede;font-weight:bold;transform:scaleX(0.8);">Stadtbezirke_Grenzen</div>
<svg class="a" style="left:187px;top:203.76px" width="7" height="7"><circle cx="3.5" cy="3.5" r="1.9" fill="none" stroke="#d8d8d8" stroke-width="0.9"/></svg>
<div class="a" style="left:20px;top:222.20px;width:186px;height:1px;background:#3f3f3f"></div>
<div class="a" style="left:44.5px;top:212.10px;width:2.2px;height:10.6px;background:#8a2aa8"></div>
<div class="a" style="left:33.5px;top:212.60px;width:1px;height:9.5px;background:#444"></div>
<svg class="a" style="left:23.5px;top:214.60px" width="8" height="6"><path d="M0.5 3 Q4 -0.5 7.5 3 Q4 6.5 0.5 3 Z" fill="none" stroke="#d0d0d0" stroke-width="0.9"/><circle cx="4" cy="3" r="1.2" fill="#d0d0d0"/></svg>
<svg class="a" style="left:50px;top:215.10px" width="4" height="5"><path d="M0 0 L4 2.5 L0 5 Z" fill="#e8e8e8"/></svg>
<svg class="a" style="left:59px;top:212.60px" width="9" height="9.5"><rect x="0.5" y="0.5" width="8" height="8.5" fill="#fbfbfb" stroke="#151515"/><circle cx="4" cy="4.5" r="2.8" fill="none" stroke="#c050a0" stroke-width="1.2"/></svg>
<div class="t" style="left:70px;top:214.67px;font-size:6.0px;color:#dedede;font-weight:bold;transform:scaleX(0.8);">Stadtteile_Grenzen</div>
<svg class="a" style="left:187px;top:214.60px" width="7" height="7"><circle cx="3.5" cy="3.5" r="1.9" fill="none" stroke="#d8d8d8" stroke-width="0.9"/></svg>
<div class="a" style="left:20px;top:233.04px;width:186px;height:1px;background:#3f3f3f"></div>
<div class="a" style="left:44.5px;top:222.94px;width:2.2px;height:10.6px;background:#363636"></div>
<div class="a" style="left:33.5px;top:223.44px;width:1px;height:9.5px;background:#444"></div>
<svg class="a" style="left:23.5px;top:225.44px" width="8" height="6"><path d="M0.5 3 Q4 -0.5 7.5 3 Q4 6.5 0.5 3 Z" fill="none" stroke="#d0d0d0" stroke-width="0.9"/><circle cx="4" cy="3" r="1.2" fill="#d0d0d0"/></svg>
<svg class="a" style="left:50px;top:225.94px" width="4" height="5"><path d="M0 0 L4 2.5 L0 5 Z" fill="#e8e8e8"/></svg>
<svg class="a" style="left:59px;top:223.44px" width="9" height="9.5"><rect x="0.5" y="0.5" width="8" height="8.5" fill="#fbfbfb" stroke="#151515"/><rect x="1.5" y="2" width="5" height="5" rx="2" fill="none" stroke="#c070b0" stroke-width="0.8"/></svg>
<div class="t" style="left:70px;top:225.51px;font-size:6.0px;color:#dedede;font-weight:bold;transform:scaleX(0.8);">Umland_Grenzen</div>
<svg class="a" style="left:187px;top:225.44px" width="7" height="7"><circle cx="3.5" cy="3.5" r="1.9" fill="none" stroke="#d8d8d8" stroke-width="0.9"/></svg>
<div class="a" style="left:20px;top:243.88px;width:186px;height:1px;background:#3f3f3f"></div>
<div class="a" style="left:44.5px;top:233.78px;width:2.2px;height:10.6px;background:#363636"></div>
<div class="a" style="left:33.5px;top:234.28px;width:1px;height:9.5px;background:#444"></div>
<svg class="a" style="left:23.5px;top:236.28px" width="8" height="6"><path d="M0.5 3 Q4 -0.5 7.5 3 Q4 6.5 0.5 3 Z" fill="none" stroke="#d0d0d0" stroke-width="0.9"/><circle cx="4" cy="3" r="1.2" fill="#d0d0d0"/></svg>
<svg class="a" style="left:50px;top:236.78px" width="4" height="5"><path d="M0 0 L4 2.5 L0 5 Z" fill="#e8e8e8"/></svg>
<svg class="a" style="left:59px;top:234.28px" width="9" height="9.5"><rect x="0.5" y="0.5" width="8" height="8.5" fill="#fbfbfb" stroke="#151515"/><path d="M1 1 L7 8 M7 1 L1 8" stroke="#4070c0" stroke-width="0.9"/></svg>
<div class="t" style="left:70px;top:236.35px;font-size:6.0px;color:#dedede;font-weight:bold;transform:scaleX(0.8);">Autobahn</div>
<svg class="a" style="left:187px;top:236.28px" width="7" height="7"><circle cx="3.5" cy="3.5" r="1.9" fill="none" stroke="#d8d8d8" stroke-width="0.9"/></svg>
<div class="a" style="left:20px;top:254.72px;width:186px;height:1px;background:#3f3f3f"></div>
<div class="a" style="left:44.5px;top:244.62px;width:2.2px;height:10.6px;background:#363636"></div>
<div class="a" style="left:33.5px;top:245.12px;width:1px;height:9.5px;background:#444"></div>
<svg class="a" style="left:23.5px;top:247.12px" width="8" height="6"><path d="M0.5 3 Q4 -0.5 7.5 3 Q4 6.5 0.5 3 Z" fill="none" stroke="#d0d0d0" stroke-width="0.9"/><circle cx="4" cy="3" r="1.2" fill="#d0d0d0"/></svg>
<svg class="a" style="left:50px;top:247.62px" width="4" height="5"><path d="M0 0 L4 2.5 L0 5 Z" fill="#e8e8e8"/></svg>
<svg class="a" style="left:59px;top:245.12px" width="9" height="9.5"><rect x="0.5" y="0.5" width="8" height="8.5" fill="#fbfbfb" stroke="#151515"/><path d="M2 7 L6 2" stroke="#f0b070" stroke-width="1"/></svg>
<div class="t" style="left:70px;top:247.19px;font-size:6.0px;color:#dedede;font-weight:bold;transform:scaleX(0.8);">Bundesstrasse</div>
<svg class="a" style="left:187px;top:247.12px" width="7" height="7"><circle cx="3.5" cy="3.5" r="1.9" fill="none" stroke="#d8d8d8" stroke-width="0.9"/></svg>
<div class="a" style="left:20px;top:265.56px;width:186px;height:1px;background:#3f3f3f"></div>
<div class="a" style="left:44.5px;top:255.46px;width:2.2px;height:10.6px;background:#363636"></div>
<div class="a" style="left:33.5px;top:255.96px;width:1px;height:9.5px;background:#444"></div>
<svg class="a" style="left:23.5px;top:257.96px" width="8" height="6"><path d="M0.5 3 Q4 -0.5 7.5 3 Q4 6.5 0.5 3 Z" fill="none" stroke="#d0d0d0" stroke-width="0.9"/><circle cx="4" cy="3" r="1.2" fill="#d0d0d0"/></svg>
<svg class="a" style="left:50px;top:258.46px" width="4" height="5"><path d="M0 0 L4 2.5 L0 5 Z" fill="#e8e8e8"/></svg>
<svg class="a" style="left:59px;top:255.96px" width="9" height="9.5"><rect x="0.5" y="0.5" width="8" height="8.5" fill="#fbfbfb" stroke="#151515"/><path d="M1 4 H7 M1 5 H7" stroke="#777" stroke-width="0.6"/></svg>
<div class="t" style="left:70px;top:258.03px;font-size:6.0px;color:#dedede;font-weight:bold;transform:scaleX(0.8);">Eisenbahn</div>
<svg class="a" style="left:187px;top:257.96px" width="7" height="7"><circle cx="3.5" cy="3.5" r="1.9" fill="none" stroke="#d8d8d8" stroke-width="0.9"/></svg>
<div class="a" style="left:20px;top:276.40px;width:186px;height:1px;background:#3f3f3f"></div>
<div class="a" style="left:44.5px;top:266.30px;width:2.2px;height:10.6px;background:#363636"></div>
<div class="a" style="left:33.5px;top:266.80px;width:1px;height:9.5px;background:#444"></div>
<svg class="a" style="left:23.5px;top:268.80px" width="8" height="6"><path d="M0.5 3 Q4 -0.5 7.5 3 Q4 6.5 0.5 3 Z" fill="none" stroke="#d0d0d0" stroke-width="0.9"/><circle cx="4" cy="3" r="1.2" fill="#d0d0d0"/></svg>
<svg class="a" style="left:50px;top:269.30px" width="4" height="5"><path d="M0 0 L4 2.5 L0 5 Z" fill="#e8e8e8"/></svg>
<svg class="a" style="left:59px;top:266.80px" width="9" height="9.5"><rect x="0.5" y="0.5" width="8" height="8.5" fill="#fbfbfb" stroke="#151515"/><path d="M1 6 q3 -4 6 -2" stroke="#70b0e0" fill="none"/></svg>
<div class="t" style="left:70px;top:268.87px;font-size:6.0px;color:#dedede;font-weight:bold;transform:scaleX(0.8);">Fluss</div>
<svg class="a" style="left:187px;top:268.80px" width="7" height="7"><circle cx="3.5" cy="3.5" r="1.9" fill="none" stroke="#d8d8d8" stroke-width="0.9"/></svg>
<div class="a" style="left:20px;top:287.24px;width:186px;height:1px;background:#3f3f3f"></div>
<div class="a" style="left:44.5px;top:277.14px;width:2.2px;height:10.6px;background:#363636"></div>
<div class="a" style="left:33.5px;top:277.64px;width:1px;height:9.5px;background:#444"></div>
<svg class="a" style="left:23.5px;top:279.64px" width="8" height="6"><path d="M0.5 3 Q4 -0.5 7.5 3 Q4 6.5 0.5 3 Z" fill="none" stroke="#d0d0d0" stroke-width="0.9"/><circle cx="4" cy="3" r="1.2" fill="#d0d0d0"/></svg>
<svg class="a" style="left:50px;top:280.14px" width="4" height="5"><path d="M0 0 L4 2.5 L0 5 Z" fill="#e8e8e8"/></svg>
<svg class="a" style="left:59px;top:277.64px" width="9" height="9.5"><rect x="0.5" y="0.5" width="8" height="8.5" fill="#fbfbfb" stroke="#151515"/><path d="M2 1 V8 M2 7 H6" stroke="#5090d0" fill="none" stroke-width="0.8"/></svg>
<div class="t" style="left:70px;top:279.71px;font-size:6.0px;color:#dedede;font-weight:bold;transform:scaleX(0.8);">Kanal</div>
<svg class="a" style="left:187px;top:279.64px" width="7" height="7"><circle cx="3.5" cy="3.5" r="1.9" fill="none" stroke="#d8d8d8" stroke-width="0.9"/></svg>
<div class="a" style="left:20px;top:298.08px;width:186px;height:1px;background:#3f3f3f"></div>
<div class="a" style="left:44.5px;top:287.98px;width:2.2px;height:10.6px;background:#363636"></div>
<div class="a" style="left:33.5px;top:288.48px;width:1px;height:9.5px;background:#444"></div>
<svg class="a" style="left:23.5px;top:290.48px" width="8" height="6"><path d="M0.5 3 Q4 -0.5 7.5 3 Q4 6.5 0.5 3 Z" fill="none" stroke="#d0d0d0" stroke-width="0.9"/><circle cx="4" cy="3" r="1.2" fill="#d0d0d0"/></svg>
<svg class="a" style="left:50px;top:290.98px" width="4" height="5"><path d="M0 0 L4 2.5 L0 5 Z" fill="#e8e8e8"/></svg>
<svg class="a" style="left:59px;top:288.48px" width="9" height="9.5"><rect x="0.5" y="0.5" width="8" height="8.5" fill="#fbfbfb" stroke="#151515"/><path d="M2 6 L4 2 L6 6 Z" stroke="#60a0e0" fill="none" stroke-width="0.8"/></svg>
<div class="t" style="left:70px;top:290.55px;font-size:6.0px;color:#dedede;font-weight:bold;transform:scaleX(0.8);">Bach</div>
<svg class="a" style="left:187px;top:290.48px" width="7" height="7"><circle cx="3.5" cy="3.5" r="1.9" fill="none" stroke="#d8d8d8" stroke-width="0.9"/></svg>
<div class="a" style="left:20px;top:308.92px;width:186px;height:1px;background:#3f3f3f"></div>
<div class="a" style="left:44.5px;top:298.82px;width:2.2px;height:10.6px;background:#363636"></div>
<div class="a" style="left:33.5px;top:299.32px;width:1px;height:9.5px;background:#444"></div>
<svg class="a" style="left:23.5px;top:301.32px" width="8" height="6"><path d="M0.5 3 Q4 -0.5 7.5 3 Q4 6.5 0.5 3 Z" fill="none" stroke="#d0d0d0" stroke-width="0.9"/><circle cx="4" cy="3" r="1.2" fill="#d0d0d0"/></svg>
<svg class="a" style="left:50px;top:301.82px" width="4" height="5"><path d="M0 0 L4 2.5 L0 5 Z" fill="#e8e8e8"/></svg>
<svg class="a" style="left:59px;top:299.32px" width="9" height="9.5"><rect x="0.5" y="0.5" width="8" height="8.5" fill="#fbfbfb" stroke="#151515"/><rect x="1" y="2" width="6" height="5" fill="none" stroke="#5090d0" stroke-width="0.8"/></svg>
<div class="t" style="left:70px;top:301.39px;font-size:6.0px;color:#dedede;font-weight:bold;transform:scaleX(0.8);">Graben</div>
<svg class="a" style="left:187px;top:301.32px" width="7" height="7"><circle cx="3.5" cy="3.5" r="1.9" fill="none" stroke="#d8d8d8" stroke-width="0.9"/></svg>
<div class="a" style="left:20px;top:319.76px;width:186px;height:1px;background:#3f3f3f"></div>
<div class="a" style="left:44.5px;top:309.66px;width:2.2px;height:10.6px;background:#363636"></div>
<div class="a" style="left:33.5px;top:310.16px;width:1px;height:9.5px;background:#444"></div>
<svg class="a" style="left:23.5px;top:312.16px" width="8" height="6"><path d="M0.5 3 Q4 -0.5 7.5 3 Q4 6.5 0.5 3 Z" fill="none" stroke="#d0d0d0" stroke-width="0.9"/><circle cx="4" cy="3" r="1.2" fill="#d0d0d0"/></svg>
<svg class="a" style="left:50px;top:312.66px" width="4" height="5"><path d="M0 0 L4 2.5 L0 5 Z" fill="#e8e8e8"/></svg>
<svg class="a" style="left:59px;top:310.16px" width="9" height="9.5"><rect x="0.5" y="0.5" width="8" height="8.5" fill="#fbfbfb" stroke="#151515"/><rect x="1" y="3" width="6" height="4" fill="#4f96e0"/></svg>
<div class="t" style="left:70px;top:312.23px;font-size:6.0px;color:#dedede;font-weight:bold;transform:scaleX(0.8);">Gewaesser_Flaeche</div>
<svg class="a" style="left:187px;top:312.16px" width="7" height="7"><circle cx="3.5" cy="3.5" r="1.9" fill="none" stroke="#d8d8d8" stroke-width="0.9"/></svg>
<div class="a" style="left:20px;top:330.60px;width:186px;height:1px;background:#3f3f3f"></div>
<div class="a" style="left:44.5px;top:320.50px;width:2.2px;height:10.6px;background:#363636"></div>
<div class="a" style="left:33.5px;top:321.00px;width:1px;height:9.5px;background:#444"></div>
<svg class="a" style="left:23.5px;top:323.00px" width="8" height="6"><path d="M0.5 3 Q4 -0.5 7.5 3 Q4 6.5 0.5 3 Z" fill="none" stroke="#d0d0d0" stroke-width="0.9"/><circle cx="4" cy="3" r="1.2" fill="#d0d0d0"/></svg>
<svg class="a" style="left:50px;top:323.50px" width="4" height="5"><path d="M0 0 L4 2.5 L0 5 Z" fill="#e8e8e8"/></svg>
<svg class="a" style="left:59px;top:321.00px" width="9" height="9.5"><rect x="0.5" y="0.5" width="8" height="8.5" fill="#fbfbfb" stroke="#151515"/><rect x="0.5" y="2.5" width="7" height="5" fill="#78b040"/></svg>
<div class="t" style="left:70px;top:323.07px;font-size:6.0px;color:#dedede;font-weight:bold;transform:scaleX(0.8);">Wald</div>
<svg class="a" style="left:187px;top:323.00px" width="7" height="7"><circle cx="3.5" cy="3.5" r="1.9" fill="none" stroke="#d8d8d8" stroke-width="0.9"/></svg>
<div class="a" style="left:20px;top:341.44px;width:186px;height:1px;background:#3f3f3f"></div>
<div class="a" style="left:44.5px;top:331.34px;width:2.2px;height:10.6px;background:#363636"></div>
<div class="a" style="left:33.5px;top:331.84px;width:1px;height:9.5px;background:#444"></div>
<svg class="a" style="left:23.5px;top:333.84px" width="8" height="6"><path d="M0.5 3 Q4 -0.5 7.5 3 Q4 6.5 0.5 3 Z" fill="none" stroke="#d0d0d0" stroke-width="0.9"/><circle cx="4" cy="3" r="1.2" fill="#d0d0d0"/></svg>
<svg class="a" style="left:50px;top:334.34px" width="4" height="5"><path d="M0 0 L4 2.5 L0 5 Z" fill="#e8e8e8"/></svg>
<svg class="a" style="left:59px;top:331.84px" width="9" height="9.5"><rect x="0.5" y="0.5" width="8" height="8.5" fill="#fbfbfb" stroke="#151515"/><rect x="2.5" y="3" width="4" height="4" fill="#b8dc90"/></svg>
<div class="t" style="left:70px;top:333.91px;font-size:6.0px;color:#dedede;font-weight:bold;transform:scaleX(0.8);">Gruenflaeche</div>
<svg class="a" style="left:187px;top:333.84px" width="7" height="7"><circle cx="3.5" cy="3.5" r="1.9" fill="none" stroke="#d8d8d8" stroke-width="0.9"/></svg>
<div class="a" style="left:20px;top:352.28px;width:186px;height:1px;background:#3f3f3f"></div>
<div class="a" style="left:44.5px;top:342.18px;width:2.2px;height:10.6px;background:#363636"></div>
<div class="a" style="left:33.5px;top:342.68px;width:1px;height:9.5px;background:#444"></div>
<svg class="a" style="left:23.5px;top:344.68px" width="8" height="6"><path d="M0.5 3 Q4 -0.5 7.5 3 Q4 6.5 0.5 3 Z" fill="none" stroke="#d0d0d0" stroke-width="0.9"/><circle cx="4" cy="3" r="1.2" fill="#d0d0d0"/></svg>
<svg class="a" style="left:50px;top:345.18px" width="4" height="5"><path d="M0 0 L4 2.5 L0 5 Z" fill="#e8e8e8"/></svg>
<svg class="a" style="left:59px;top:342.68px" width="9" height="9.5"><rect x="0.5" y="0.5" width="8" height="8.5" fill="#fbfbfb" stroke="#151515"/><rect x="2" y="2.5" width="5" height="5" fill="#f5cf5a"/></svg>
<div class="t" style="left:70px;top:344.75px;font-size:6.0px;color:#dedede;font-weight:bold;transform:scaleX(0.8);">Siedlung</div>
<svg class="a" style="left:187px;top:344.68px" width="7" height="7"><circle cx="3.5" cy="3.5" r="1.9" fill="none" stroke="#d8d8d8" stroke-width="0.9"/></svg>
<div class="a" style="left:20px;top:363.12px;width:186px;height:1px;background:#3f3f3f"></div>
<div class="a" style="left:44.5px;top:353.02px;width:2.2px;height:10.6px;background:#363636"></div>
<div class="a" style="left:33.5px;top:353.52px;width:1px;height:9.5px;background:#444"></div>
<svg class="a" style="left:50px;top:356.02px" width="4" height="5"><path d="M0 0 L4 2.5 L0 5 Z" fill="#e8e8e8"/></svg>
<svg class="a" style="left:59px;top:353.52px" width="9" height="9.5"><rect x="0.5" y="0.5" width="8" height="8.5" fill="#fbfbfb" stroke="#151515"/><rect x="1" y="2" width="3" height="3" fill="#f0c060"/><rect x="4" y="5" width="3" height="3" fill="#a0c870"/></svg>
<div class="t" style="left:70px;top:355.59px;font-size:6.0px;color:#dedede;font-weight:bold;transform:scaleX(0.8);">Stadtbezirke_Flaeche</div>
<svg class="a" style="left:187px;top:355.52px" width="7" height="7"><circle cx="3.5" cy="3.5" r="1.9" fill="none" stroke="#d8d8d8" stroke-width="0.9"/></svg>
<div class="a" style="left:20px;top:373.96px;width:186px;height:1px;background:#3f3f3f"></div>
<div class="a" style="left:44.5px;top:363.86px;width:2.2px;height:10.6px;background:#363636"></div>
<div class="a" style="left:33.5px;top:364.36px;width:1px;height:9.5px;background:#444"></div>
<svg class="a" style="left:50px;top:366.86px" width="4" height="5"><path d="M0 0 L4 2.5 L0 5 Z" fill="#e8e8e8"/></svg>
<svg class="a" style="left:59px;top:364.36px" width="9" height="9.5"><rect x="0.5" y="0.5" width="8" height="8.5" fill="#fbfbfb" stroke="#151515"/><rect x="1" y="2" width="3" height="3" fill="#f0c060"/><rect x="4" y="5" width="3" height="3" fill="#d0a0c0"/></svg>
<div class="t" style="left:70px;top:366.43px;font-size:6.0px;color:#dedede;font-weight:bold;transform:scaleX(0.8);">Stadtteile_Flaeche</div>
<svg class="a" style="left:187px;top:366.36px" width="7" height="7"><circle cx="3.5" cy="3.5" r="1.9" fill="none" stroke="#d8d8d8" stroke-width="0.9"/></svg>
<div class="a" style="left:20px;top:384.80px;width:186px;height:1px;background:#3f3f3f"></div>
<div class="a" style="left:44.5px;top:374.70px;width:2.2px;height:10.6px;background:#363636"></div>
<div class="a" style="left:33.5px;top:375.20px;width:1px;height:9.5px;background:#444"></div>
<svg class="a" style="left:23.5px;top:377.20px" width="8" height="6"><path d="M0.5 3 Q4 -0.5 7.5 3 Q4 6.5 0.5 3 Z" fill="none" stroke="#d0d0d0" stroke-width="0.9"/><circle cx="4" cy="3" r="1.2" fill="#d0d0d0"/></svg>
<svg class="a" style="left:50px;top:377.70px" width="4" height="5"><path d="M0 0 L4 2.5 L0 5 Z" fill="#e8e8e8"/></svg>
<svg class="a" style="left:59px;top:375.20px" width="9" height="9.5"><rect x="0.5" y="0.5" width="8" height="8.5" fill="#fbfbfb" stroke="#151515"/><rect x="0.5" y="1" width="7" height="7" fill="#f3cd5c"/></svg>
<div class="t" style="left:70px;top:377.27px;font-size:6.0px;color:#dedede;font-weight:bold;transform:scaleX(0.8);">Hintergrund</div>
<svg class="a" style="left:187px;top:377.20px" width="7" height="7"><circle cx="3.5" cy="3.5" r="1.9" fill="none" stroke="#d8d8d8" stroke-width="0.9"/></svg>
<div class="a" style="left:20px;top:395.64px;width:186px;height:1px;background:#3f3f3f"></div>
<div class="a" style="left:44.5px;top:385.54px;width:2.2px;height:10.6px;background:#363636"></div>
<div class="a" style="left:33.5px;top:386.04px;width:1px;height:9.5px;background:#444"></div>
<svg class="a" style="left:23.5px;top:388.04px" width="8" height="6"><path d="M0.5 3 Q4 -0.5 7.5 3 Q4 6.5 0.5 3 Z" fill="none" stroke="#d0d0d0" stroke-width="0.9"/><circle cx="4" cy="3" r="1.2" fill="#d0d0d0"/></svg>
<svg class="a" style="left:50px;top:388.54px" width="4" height="5"><path d="M0 0 L4 2.5 L0 5 Z" fill="#e8e8e8"/></svg>
<svg class="a" style="left:59px;top:386.04px" width="9" height="9.5"><rect x="0.5" y="0.5" width="8" height="8.5" fill="#fbfbfb" stroke="#151515"/></svg>
<div class="t" style="left:70px;top:388.11px;font-size:6.0px;color:#dedede;font-weight:bold;transform:scaleX(0.8);">Hintergrund_weiss</div>
<svg class="a" style="left:187px;top:388.04px" width="7" height="7"><circle cx="3.5" cy="3.5" r="1.9" fill="none" stroke="#d8d8d8" stroke-width="0.9"/></svg>
<div class="a" style="left:208px;top:42px;width:391px;height:557px;background:#d6d9dd"></div>
<div class="a" style="left:208px;top:42px;width:1px;height:557px;background:#eef1f4"></div>
<div class="a" style="left:208px;top:42px;width:391px;height:1px;background:#e9edf1"></div>
<div class="a" style="left:229px;top:53px;width:370px;height:546px;background:#a4a4a4"></div>
<div class="a" style="left:230.5px;top:54.5px;width:368.5px;height:544.5px;background:#ffffff"></div>
<div class="a" style="left:227.5px;top:52px;width:4px;height:4px;border-radius:50%;background:#111"></div>
<div class="a" style="left:599px;top:31px;width:1px;height:569px;background:#2a2a2a"></div>
<div class="a" style="left:232px;top:89px;width:309px;height:59px;background:#000;border-radius:0 4px 4px 0"></div>
<svg class="a" style="left:0;top:0;will-change:transform" width="600" height="600"><text transform="translate(349.2 137.2) scale(0.86 1)" x="0" y="0" font-size="53" fill="#fff" stroke="#fff" stroke-width="2.0" font-family="Liberation Sans" textLength="187.79" lengthAdjust="spacing">BERLIN</text><text transform="translate(350.6 176.7) scale(0.88 1)" x="0" y="0" font-size="22.5" fill="#951a5e" stroke="#951a5e" stroke-width="0.6" font-family="Liberation Sans" textLength="173.86" lengthAdjust="spacing">12 Stadtbezirke</text><text transform="translate(379.2 200.8) scale(0.88 1)" x="0" y="0" font-size="19.5" fill="#951a5e" stroke="#951a5e" stroke-width="0.55" font-family="Liberation Sans" textLength="121.02" lengthAdjust="spacing">97 Stadtteile</text></svg>
<svg class="a" style="left:0;top:0;will-change:transform" width="600" height="600"><defs><clipPath id="cb"><polygon points="547,186 566,187 581,185.5 600,186 600,600 389,600 389,580 390.5,571 401,565.6 413,546 431,524 446.5,513 468,487 432.5,466 427,461 387,467.5 396,432.5 401,408 405,390 408.3,368.3 415,375 421,377.5 429,378 434,371.7 432,357.5 434,355 435,347 439,338 443.3,324 443.3,315 442,305.7 438,300.3 424.7,305.7 411.3,308.3 404.7,299 406,289.7 420.7,285.7 435.3,280.3 443.3,269.7 448.7,263 460.7,261 467.3,264.3 478,269.7 500,280 521,289 530,287.5 543,289 543,284 540,268 530,256 518,244 518,238 530,224 540,208 546,192"/></clipPath><clipPath id="ab"><rect x="231" y="55" width="368" height="544"/></clipPath></defs><g clip-path="url(#ab)"><polygon points="547,186 566,187 581,185.5 600,186 600,600 389,600 389,580 390.5,571 401,565.6 413,546 431,524 446.5,513 468,487 432.5,466 427,461 387,467.5 396,432.5 401,408 405,390 408.3,368.3 415,375 421,377.5 429,378 434,371.7 432,357.5 434,355 435,347 439,338 443.3,324 443.3,315 442,305.7 438,300.3 424.7,305.7 411.3,308.3 404.7,299 406,289.7 420.7,285.7 435.3,280.3 443.3,269.7 448.7,263 460.7,261 467.3,264.3 478,269.7 500,280 521,289 530,287.5 543,289 543,284 540,268 530,256 518,244 518,238 530,224 540,208 546,192" fill="#f5d36e"/><g clip-path="url(#cb)"><polygon points="400,284 420,283 435,277 443,267 448,258 461,256 467,260 478,265 500,275 521,284 530,283 545,284 545,300 536,312 531,338 509,342 490,345 470,350 455,348 441,343" fill="#9ab94f"/><polygon points="402,288 420,285 436,279 440,284 425,292 410,296 404,298" fill="#d6edb4"/><polygon points="406,300 420,302 436,300 425,306 412,307" fill="#d6edb4"/><polygon points="547,268 565,266 581,260.6 590,255 592.3,240.5 600,236 600,383.3 573.3,362 561.3,351.3 558.7,340.7 546.7,316.7 543,300 545,285" fill="#9ab94f"/><polygon points="581,184 600,184 600,230 596,225 590.5,221 593.2,216.6 593.2,207.5 586.8,198.3" fill="#9ab94f"/><polygon points="585,232 600,228 600,250 590,248" fill="#9ab94f"/><polygon points="549,440 566,442 567,470 560,492 540,492 546,475" fill="#9ab94f"/><polygon points="515,458 530,448 545,445 547,475 540,487 532,500 520,506 515,490" fill="#9ab94f"/><polygon points="503,515 524,506 532,501 600,494 600,600 497,600 500,550 499,528" fill="#9ab94f"/><polygon points="566,470 590,478 582,492 560,494" fill="#d6edb4"/><polygon points="440,498 470,486 482,495 480,530 489,560 492,582 470,582 445,565 420,545 431,524 446.5,513" fill="#d6edb4"/><polygon points="417,542 440,545 455,553 470,563 480,575 480,600 420,600 425,570 417,560" fill="#9ab94f"/><polygon points="389,600 389,568 403,562 417,550 420,575 425,600" fill="#d6edb4"/><polygon points="455,535 470,518 476,522 461,537" fill="#9ab94f"/><polygon points="390,442 426,451 434,459 427,461 387,467.5" fill="#9ab94f"/><polygon points="430,452 445,462 450,470 436,467" fill="#d6edb4"/><polygon points="552,252 566,250 570,260 556,264" fill="#d6edb4"/><polygon points="496,328 512,314.7 530.7,328 528,344 506.7,344" fill="#f5d36e"/><polygon points="544,276 572,276 576,298 568,308 548,311 545,300" fill="#f5d36e"/><polygon points="546,312 570,316 575,328 566,336 558,336 550,325" fill="#f5d36e"/><polygon points="530,300 545,300 545,345 531,345 536,312" fill="#f5d36e"/><polygon points="567,444 600,440 600,490 588,482 568,468" fill="#f5d36e"/><polygon points="468,486 500,476 498,500 493,515 493,580 475,580 478,560 486,540 481,510" fill="#f5d36e"/><polygon points="395,555 415,540 420,548 400,570" fill="#f5d36e"/><polygon points="409,273 418,273 420,284 410,286" fill="#f5d36e"/><rect x="452" y="352" width="8" height="10" fill="#9ab94f"/><rect x="468" y="350" width="6" height="14" fill="#9ab94f"/><rect x="478" y="355" width="4" height="10" fill="#9ab94f"/><rect x="445" y="372" width="5" height="6" fill="#9ab94f"/><rect x="442" y="395" width="5" height="10" fill="#9ab94f"/><rect x="500" y="398" width="6" height="3" fill="#9ab94f"/><rect x="515" y="420" width="5" height="4" fill="#9ab94f"/><rect x="560" y="295" width="5" height="4" fill="#9ab94f"/><rect x="556" y="385" width="5" height="4" fill="#9ab94f"/><rect x="575" y="410" width="6" height="5" fill="#9ab94f"/><rect x="482" y="452" width="5" height="4" fill="#9ab94f"/><rect x="428" y="412" width="6" height="4" fill="#9ab94f"/><rect x="470" y="375" width="10" height="4" fill="#9ab94f"/><rect x="450" y="420" width="4" height="6" fill="#9ab94f"/><rect x="404" y="425" width="4" height="6" fill="#9ab94f"/><rect x="590" y="395" width="6" height="4" fill="#9ab94f"/><rect x="585" y="420" width="5" height="5" fill="#9ab94f"/><rect x="522" y="380" width="4" height="5" fill="#9ab94f"/><rect x="480" y="430" width="6" height="3" fill="#9ab94f"/><rect x="533" y="460" width="5" height="6" fill="#9ab94f"/><rect x="505" y="455" width="4" height="4" fill="#9ab94f"/><rect x="440" y="480" width="8" height="3" fill="#9ab94f"/><rect x="560" y="425" width="5" height="4" fill="#9ab94f"/><rect x="545" y="455" width="3" height="12" fill="#9ab94f"/><rect x="573" y="450" width="4" height="5" fill="#9ab94f"/><rect x="570" y="305" width="5" height="4" fill="#9ab94f"/><rect x="590" y="290" width="4" height="5" fill="#9ab94f"/><rect x="540" y="430" width="4" height="4" fill="#9ab94f"/><rect x="398" y="450" width="1.5" height="12" fill="#d6edb4"/><rect x="406" y="449" width="2" height="14" fill="#d6edb4"/><rect x="416" y="452" width="1.5" height="10" fill="#d6edb4"/><rect x="531" y="509" width="8" height="3" fill="#f5d36e" transform="rotate(20 531 509)"/><rect x="540" y="520" width="3" height="2" fill="#f5d36e" transform="rotate(0 540 520)"/><rect x="513" y="565" width="3" height="2" fill="#f5d36e" transform="rotate(0 513 565)"/><rect x="441" y="290" width="6" height="5" fill="#d6edb4" transform="rotate(-40 441 290)"/><rect x="447" y="292" width="5" height="5" fill="#d6edb4" transform="rotate(-40 447 292)"/><rect x="470" y="281" width="3" height="6" fill="#d6edb4" transform="rotate(-30 470 281)"/><rect x="490" y="300" width="8" height="3" fill="#d6edb4" transform="rotate(-35 490 300)"/><rect x="507" y="296" width="9" height="3" fill="#d6edb4" transform="rotate(-35 507 296)"/><rect x="440" y="317" width="4" height="4" fill="#d6edb4" transform="rotate(0 440 317)"/><rect x="455" y="309" width="3" height="3" fill="#d6edb4" transform="rotate(0 455 309)"/><rect x="553" y="504" width="12" height="8" fill="#d6edb4" transform="rotate(20 553 504)"/><rect x="548" y="560" width="13" height="7" fill="#d6edb4" transform="rotate(35 548 560)"/><rect x="530" y="545" width="4" height="3" fill="#d6edb4" transform="rotate(0 530 545)"/><rect x="575" y="563" width="7" height="6" fill="#d6edb4" transform="rotate(0 575 563)"/><rect x="580" y="505" width="6" height="3" fill="#d6edb4" transform="rotate(-20 580 505)"/><rect x="575" y="547" width="6" height="5" fill="#d6edb4" transform="rotate(0 575 547)"/><rect x="572" y="515" width="6" height="4" fill="#d6edb4" transform="rotate(0 572 515)"/><rect x="584" y="295" width="8" height="4" fill="#d6edb4" transform="rotate(-30 584 295)"/><rect x="595" y="335" width="3" height="5" fill="#d6edb4" transform="rotate(0 595 335)"/><rect x="518" y="540" width="3" height="6" fill="#d6edb4" transform="rotate(0 518 540)"/><polygon points="546,184 545,192 539,208 529,224 519,238 522,248 530,256 540,268 542,284 542,300 547,300 547,284 544,266 534,253 527,246 524,240 533,226 543,210 550,194 551,186" fill="#6fb3ee"/><rect x="534" y="236" width="9" height="20" rx="4" fill="#6fb3ee" transform="rotate(22 538.5 246)"/><path d="M531,250 L536,234" stroke="#9ab94f" stroke-width="1.5"/><path d="M554,343 L549,356 L545,365" fill="none" stroke="#6fb3ee" stroke-width="3"/><polygon points="498,478 493,488 492,500 494,512 491,529 489,545 491,580 492,600 506,600 505,580 503,533 510,517 526,506 533,500 525,494 519,484 512,476 505,475" fill="#6fb3ee"/><polygon points="537,300 544,302 550,320 556,338 558,346 552,360 546,375 541,390 535,386 539,370 545,355 540,335 537,318" fill="#6fb3ee"/><polygon points="576,314 590,303 600,300 600,351 580,352 566,360 560,356 562,345 566,332 572,326" fill="#6fb3ee"/><ellipse cx="585" cy="330" rx="4" ry="10" fill="#9ab94f" transform="rotate(15 585 330)"/><circle cx="579" cy="346" r="2.2" fill="#9ab94f"/><path d="M536,397 L548,392 L556,396 M532,405 L545,414 L555,418 M528,416 L518,412 M525,430 L535,440 M520,445 L510,440 M541,383 L530,378 M545,370 L535,362 M514,460 L505,452" fill="none" stroke="#6fb3ee" stroke-width="2.2"/><path d="M440.5,278.75 L460.5,287.5 L461.75,310 L470.5,325 L503,335 L512,345 M443,305 L458,300 L461,296 M470.5,325 L480,330" fill="none" stroke="#6aa8dc" stroke-width="0.9"/><polygon points="448,312 453,309 456,316 451,318" fill="#6fb3ee"/><circle cx="456" cy="336" r="1.5" fill="#6fb3ee"/><rect x="458" y="265" width="5" height="3" fill="#6fb3ee"/><path d="M548,270 L565,266 L581,260.6 L590,255 L592.3,240.5 L600,238" fill="none" stroke="#b86aae" stroke-width="1"/><path d="M590.5,221 L600,232" fill="none" stroke="#b86aae" stroke-width="1"/><path d="M440,340 L451.7,345 L480,358.3 L508.3,370.8 L526.7,370 L530,376.7 L528.3,406.7 L530,418.3 L553.3,418.3 L566.7,421.7 L583.3,416.7 L586.7,410 L590,391.7 L576.7,390 L571.7,386.7 L573.3,370 L568.3,360" fill="none" stroke="#b86aae" stroke-width="1"/><path d="M508.3,370.8 L503.3,378.3 L503.3,396.7 L498.3,403.3 L490,406.7 L488.3,415" fill="none" stroke="#b86aae" stroke-width="1"/><path d="M430,391.7 L446.7,395 L458.3,400 L463.3,406.7 L471.7,411.7 L486.7,413.3" fill="none" stroke="#b86aae" stroke-width="1"/><path d="M458.3,400 L460,410 L458.3,415 L463.3,426.7 L465,440 L470,455 L490,460" fill="none" stroke="#b86aae" stroke-width="1"/><path d="M458.3,415 L473.3,413.3" fill="none" stroke="#b86aae" stroke-width="1"/><path d="M465,440 L468,448 L476.7,451.7 L478.3,456.7 L470,461.7 L463.3,470 L461.7,475 L453.3,475" fill="none" stroke="#b86aae" stroke-width="1"/><path d="M465,430 L480,433.3 L500,433.3 L515,440" fill="none" stroke="#b86aae" stroke-width="1"/><path d="M590,391.7 L600,390" fill="none" stroke="#b86aae" stroke-width="1"/><path d="M586.7,416.7 L600,416.7" fill="none" stroke="#b86aae" stroke-width="1"/><path d="M566.7,421.7 L576.7,430" fill="none" stroke="#b86aae" stroke-width="1"/><path d="M528.3,435 L533.3,443.3 L530,460" fill="none" stroke="#b86aae" stroke-width="1"/><path d="M545,300 L568,308 L576,298 L572,278" fill="none" stroke="#b86aae" stroke-width="1"/><path d="M451,507 L494,511" fill="none" stroke="#b86aae" stroke-width="1"/><path d="M421,550 L425,566 L445,568 L445,580" fill="none" stroke="#b86aae" stroke-width="1"/><path d="M533,503 L600,496" fill="none" stroke="#b86aae" stroke-width="1"/><path d="M405,422 L430,425 L446.7,420" fill="none" stroke="#b86aae" stroke-width="1"/><path d="M510,440 L520,455 L505,470 L512,478" fill="none" stroke="#b86aae" stroke-width="1"/><path d="M555,470 L575,478 L600,478" fill="none" stroke="#b86aae" stroke-width="1"/><path d="M420,470 L440,480 L455,486" fill="none" stroke="#b86aae" stroke-width="1"/><path d="M503.3,396.7 L520,398 L528.3,400" fill="none" stroke="#b86aae" stroke-width="1"/><path d="M557,189 L600,240" fill="none" stroke="#a3afcf" stroke-width="1"/><path d="M400,398.3 L460,410 L485,416.7 L513.3,421.7 L550,423.3 L580,430 L600,435" fill="none" stroke="#a3afcf" stroke-width="1"/><path d="M400,411.7 L455,413.3 L485,418.3 L533,426.7 L575,431.7 L586.7,438.3" fill="none" stroke="#a3afcf" stroke-width="1"/><path d="M475,348.3 L468.3,410" fill="none" stroke="#a3afcf" stroke-width="1"/><path d="M475,348.3 L505,340" fill="none" stroke="#a3afcf" stroke-width="1"/><path d="M586.7,418.3 L578.3,436.7" fill="none" stroke="#a3afcf" stroke-width="1"/><path d="M583,560 L600,540" fill="none" stroke="#a3afcf" stroke-width="1"/><path d="M552,200 L560,215 L548,228 M556,206 L575,212 M552,222 L572,226 M560,215 L562,240" fill="none" stroke="#a3afcf" stroke-width="1"/><polygon points="450,353 472,353 472,368 450,368" fill="#9ab94f"/><polygon points="455,370 462,370 462,378 455,378" fill="#9ab94f"/><polygon points="456.7,386.7 468.3,386.7 468.3,395 456.7,395" fill="#9ab94f"/><polygon points="470,340 512,340 512,356 470,350" fill="#9ab94f"/><polygon points="466.7,398 496.7,398 496.7,403 466.7,403" fill="#9ab94f"/><polygon points="580,360 600,360 600,373 590,373" fill="#9ab94f"/><polygon points="550,446 570,446 570,460 550,460" fill="#9ab94f"/><polygon points="430,395 436,395 436,405 430,405" fill="#9ab94f"/><polygon points="541,360 552,366 551.7,385 550,401.7 540,406.7 533,406.7 530,415 525,415 528,400 535,385 538,368" fill="#6fb3ee"/><ellipse cx="543" cy="385" rx="2.5" ry="5" fill="#f5d36e"/><path d="M530,415 L516.7,431.7 L515,446.7 L510,460 L505,474" fill="none" stroke="#6fb3ee" stroke-width="3"/><polygon points="458.3,395 465,395 465,400 458.3,400" fill="#6fb3ee"/><polygon points="430,380 436,382 438,392 432,392" fill="#6fb3ee"/><path d="M385,437 L536.7,485.8 L558.7,493.7 L582,492.5" fill="none" stroke="#fff" stroke-width="2.2"/><path d="M481.7,468.3 L470,486.7" fill="none" stroke="#fff" stroke-width="1.5"/></g><polygon points="547,186 566,187 581,185.5 600,186 600,600 389,600 389,580 390.5,571 401,565.6 413,546 431,524 446.5,513 468,487 432.5,466 427,461 387,467.5 396,432.5 401,408 405,390 408.3,368.3 415,375 421,377.5 429,378 434,371.7 432,357.5 434,355 435,347 439,338 443.3,324 443.3,315 442,305.7 438,300.3 424.7,305.7 411.3,308.3 404.7,299 406,289.7 420.7,285.7 435.3,280.3 443.3,269.7 448.7,263 460.7,261 467.3,264.3 478,269.7 500,280 521,289 530,287.5 543,289 543,284 540,268 530,256 518,244 518,238 530,224 540,208 546,192" fill="none" stroke="#8c1656" stroke-width="2.1" stroke-linejoin="round"/><path d="M542,289 L546.7,316.7 L558.7,340.7 L561.3,351.3 L573.3,362 L600,383.3" fill="none" stroke="#8c1656" stroke-width="2"/><path d="M600,434 L589,440 L587,444.7 L552,443.5 L547,475 L540,486.7 L531.8,500.7 L523.7,506.5 L502.7,514.7 L499,528.7 L500.3,549.7 L496.8,580 L497,600" fill="none" stroke="#8c1656" stroke-width="2"/><path d="M580.4,187.3 L586.8,198.3 L593.2,207.5 L593.2,216.6 L590.5,221 L596,225 L600,228" fill="none" stroke="#2456b0" stroke-width="2.2"/><path d="M603,544 L564,600" fill="none" stroke="#2456b0" stroke-width="2.6"/><path d="M603,556 L572,600" fill="none" stroke="#b8bed8" stroke-width="1.2"/><rect x="427" y="446.8" width="16" height="9.5" rx="2" fill="#fff" stroke="#222" stroke-width="1.1"/><text x="435" y="454.6" font-size="8" font-weight="bold" text-anchor="middle" fill="#111" font-family="Liberation Sans">5</text><rect x="581.5" y="486" width="16" height="9.5" rx="2" fill="#fff" stroke="#222" stroke-width="1.1"/><text x="589.5" y="493.8" font-size="7.5" font-weight="bold" text-anchor="middle" fill="#111" font-family="Liberation Sans">2/5</text><rect x="427.5" y="526" width="11" height="9" rx="2" fill="#fff" stroke="#222" stroke-width="1.1"/><text x="539" y="231.5" font-size="8" font-weight="bold" font-family="Liberation Sans" textLength="34.0" lengthAdjust="spacingAndGlyphs" fill="#fff" stroke="#fff" stroke-width="1.6" opacity="0.55">Heiligensee</text><text x="539" y="231.5" font-size="8" font-weight="bold" font-family="Liberation Sans" textLength="34.0" lengthAdjust="spacingAndGlyphs" fill="#951a5e" stroke="#951a5e" stroke-width="0.25">Heiligensee</text><text x="544" y="293.5" font-size="8" font-weight="bold" font-family="Liberation Sans" textLength="28.0" lengthAdjust="spacingAndGlyphs" fill="#fff" stroke="#fff" stroke-width="1.6" opacity="0.55">Konrads-</text><text x="544" y="293.5" font-size="8" font-weight="bold" font-family="Liberation Sans" textLength="28.0" lengthAdjust="spacingAndGlyphs" fill="#951a5e" stroke="#951a5e" stroke-width="0.25">Konrads-</text><text x="550.7" y="303" font-size="8" font-weight="bold" font-family="Liberation Sans" textLength="14.6" lengthAdjust="spacingAndGlyphs" fill="#fff" stroke="#fff" stroke-width="1.6" opacity="0.55">höhe</text><text x="550.7" y="303" font-size="8" font-weight="bold" font-family="Liberation Sans" textLength="14.6" lengthAdjust="spacingAndGlyphs" fill="#951a5e" stroke="#951a5e" stroke-width="0.25">höhe</text><text x="498.7" y="339" font-size="8" font-weight="bold" font-family="Liberation Sans" textLength="33.3" lengthAdjust="spacingAndGlyphs" fill="#fff" stroke="#fff" stroke-width="1.6" opacity="0.55">Hakenfelde</text><text x="498.7" y="339" font-size="8" font-weight="bold" font-family="Liberation Sans" textLength="33.3" lengthAdjust="spacingAndGlyphs" fill="#951a5e" stroke="#951a5e" stroke-width="0.25">Hakenfelde</text><text x="449.3" y="383" font-size="8" font-weight="bold" font-family="Liberation Sans" textLength="45.4" lengthAdjust="spacingAndGlyphs" fill="#fff" stroke="#fff" stroke-width="1.6" opacity="0.55">Falkenhagener</text><text x="449.3" y="383" font-size="8" font-weight="bold" font-family="Liberation Sans" textLength="45.4" lengthAdjust="spacingAndGlyphs" fill="#951a5e" stroke="#951a5e" stroke-width="0.25">Falkenhagener</text><text x="465.3" y="391.5" font-size="8" font-weight="bold" font-family="Liberation Sans" textLength="13.4" lengthAdjust="spacingAndGlyphs" fill="#fff" stroke="#fff" stroke-width="1.6" opacity="0.55">Feld</text><text x="465.3" y="391.5" font-size="8" font-weight="bold" font-family="Liberation Sans" textLength="13.4" lengthAdjust="spacingAndGlyphs" fill="#951a5e" stroke="#951a5e" stroke-width="0.25">Feld</text><text x="501.3" y="415.7" font-size="8" font-weight="bold" font-family="Liberation Sans" textLength="25.4" lengthAdjust="spacingAndGlyphs" fill="#fff" stroke="#fff" stroke-width="1.6" opacity="0.55">Spandau</text><text x="501.3" y="415.7" font-size="8" font-weight="bold" font-family="Liberation Sans" textLength="25.4" lengthAdjust="spacingAndGlyphs" fill="#951a5e" stroke="#951a5e" stroke-width="0.25">Spandau</text><text x="545.3" y="406.3" font-size="8" font-weight="bold" font-family="Liberation Sans" textLength="32.0" lengthAdjust="spacingAndGlyphs" fill="#fff" stroke="#fff" stroke-width="1.6" opacity="0.55">Haselhorst</text><text x="545.3" y="406.3" font-size="8" font-weight="bold" font-family="Liberation Sans" textLength="32.0" lengthAdjust="spacingAndGlyphs" fill="#951a5e" stroke="#951a5e" stroke-width="0.25">Haselhorst</text><text x="416.8" y="429.6" font-size="8" font-weight="bold" font-family="Liberation Sans" textLength="22.7" lengthAdjust="spacingAndGlyphs" fill="#fff" stroke="#fff" stroke-width="1.6" opacity="0.55">Staaken</text><text x="416.8" y="429.6" font-size="8" font-weight="bold" font-family="Liberation Sans" textLength="22.7" lengthAdjust="spacingAndGlyphs" fill="#951a5e" stroke="#951a5e" stroke-width="0.25">Staaken</text><text x="481.3" y="467.7" font-size="8" font-weight="bold" font-family="Liberation Sans" textLength="38.7" lengthAdjust="spacingAndGlyphs" fill="#fff" stroke="#fff" stroke-width="1.6" opacity="0.55">Wilhelmstadt</text><text x="481.3" y="467.7" font-size="8" font-weight="bold" font-family="Liberation Sans" textLength="38.7" lengthAdjust="spacingAndGlyphs" fill="#951a5e" stroke="#951a5e" stroke-width="0.25">Wilhelmstadt</text><text x="582.7" y="474.3" font-size="8" font-weight="bold" font-family="Liberation Sans" textLength="17.8" lengthAdjust="spacingAndGlyphs" fill="#fff" stroke="#fff" stroke-width="1.6" opacity="0.55">Westb</text><text x="582.7" y="474.3" font-size="8" font-weight="bold" font-family="Liberation Sans" textLength="17.8" lengthAdjust="spacingAndGlyphs" fill="#951a5e" stroke="#951a5e" stroke-width="0.25">Westb</text><text x="590.7" y="425" font-size="8" font-weight="bold" font-family="Liberation Sans" textLength="9.3" lengthAdjust="spacingAndGlyphs" fill="#fff" stroke="#fff" stroke-width="1.6" opacity="0.55">Si</text><text x="590.7" y="425" font-size="8" font-weight="bold" font-family="Liberation Sans" textLength="9.3" lengthAdjust="spacingAndGlyphs" fill="#951a5e" stroke="#951a5e" stroke-width="0.25">Si</text><text x="464.3" y="550" font-size="8" font-weight="bold" font-family="Liberation Sans" textLength="18.4" lengthAdjust="spacingAndGlyphs" fill="#fff" stroke="#fff" stroke-width="1.6" opacity="0.55">Gatow</text><text x="464.3" y="550" font-size="8" font-weight="bold" font-family="Liberation Sans" textLength="18.4" lengthAdjust="spacingAndGlyphs" fill="#951a5e" stroke="#951a5e" stroke-width="0.25">Gatow</text><text x="565.7" y="253.3" font-size="13" font-weight="bold" font-family="Liberation Sans" textLength="33.8" lengthAdjust="spacingAndGlyphs" fill="#fff" stroke="#fff" stroke-width="1.6" opacity="0.55">12_Rei</text><text x="565.7" y="253.3" font-size="13" font-weight="bold" font-family="Liberation Sans" textLength="33.8" lengthAdjust="spacingAndGlyphs" fill="#951a5e" stroke="#951a5e" stroke-width="0.6">12_Rei</text><text x="481.3" y="431.3" font-size="12" font-weight="bold" font-family="Liberation Sans" textLength="54.7" lengthAdjust="spacingAndGlyphs" fill="#fff" stroke="#fff" stroke-width="1.6" opacity="0.55">5_Spandau</text><text x="481.3" y="431.3" font-size="12" font-weight="bold" font-family="Liberation Sans" textLength="54.7" lengthAdjust="spacingAndGlyphs" fill="#951a5e" stroke="#951a5e" stroke-width="0.6">5_Spandau</text><text x="541.3" y="533" font-size="12.5" font-weight="bold" font-family="Liberation Sans" textLength="58.2" lengthAdjust="spacingAndGlyphs" fill="#fff" stroke="#fff" stroke-width="1.6" opacity="0.55">4_Charlotte</text><text x="541.3" y="533" font-size="12.5" font-weight="bold" font-family="Liberation Sans" textLength="58.2" lengthAdjust="spacingAndGlyphs" fill="#951a5e" stroke="#951a5e" stroke-width="0.6">4_Charlotte</text><text x="556" y="544" font-size="12.5" font-weight="bold" font-family="Liberation Sans" textLength="43.5" lengthAdjust="spacingAndGlyphs" fill="#fff" stroke="#fff" stroke-width="1.6" opacity="0.55">Wilmers</text><text x="556" y="544" font-size="12.5" font-weight="bold" font-family="Liberation Sans" textLength="43.5" lengthAdjust="spacingAndGlyphs" fill="#951a5e" stroke="#951a5e" stroke-width="0.6">Wilmers</text><text x="0" y="0" font-size="9" font-style="italic" font-weight="bold" fill="#2a3f7a" font-family="Liberation Serif" transform="translate(512,505) rotate(-70)" textLength="25" lengthAdjust="spacingAndGlyphs">Havel</text></g></svg>
<div class="a" style="left:0;top:580px;width:599px;height:18.5px;background:rgba(244,247,250,0.82)"></div>
<div class="a" style="left:0;top:580px;width:1px;height:19px;background:#333"></div>
<div class="a" style="left:0;top:598.5px;width:600px;height:1.5px;background:#2a2a2a"></div>
<div class="t" id="cap" style="left:7px;top:580.9px;font-size:14.1px;color:#2c2c2c;will-change:transform">Basisdaten (c) OpenStreetMap-Mitwirkende | (c) Kartographie by grebemaps</div>
</body></html>
